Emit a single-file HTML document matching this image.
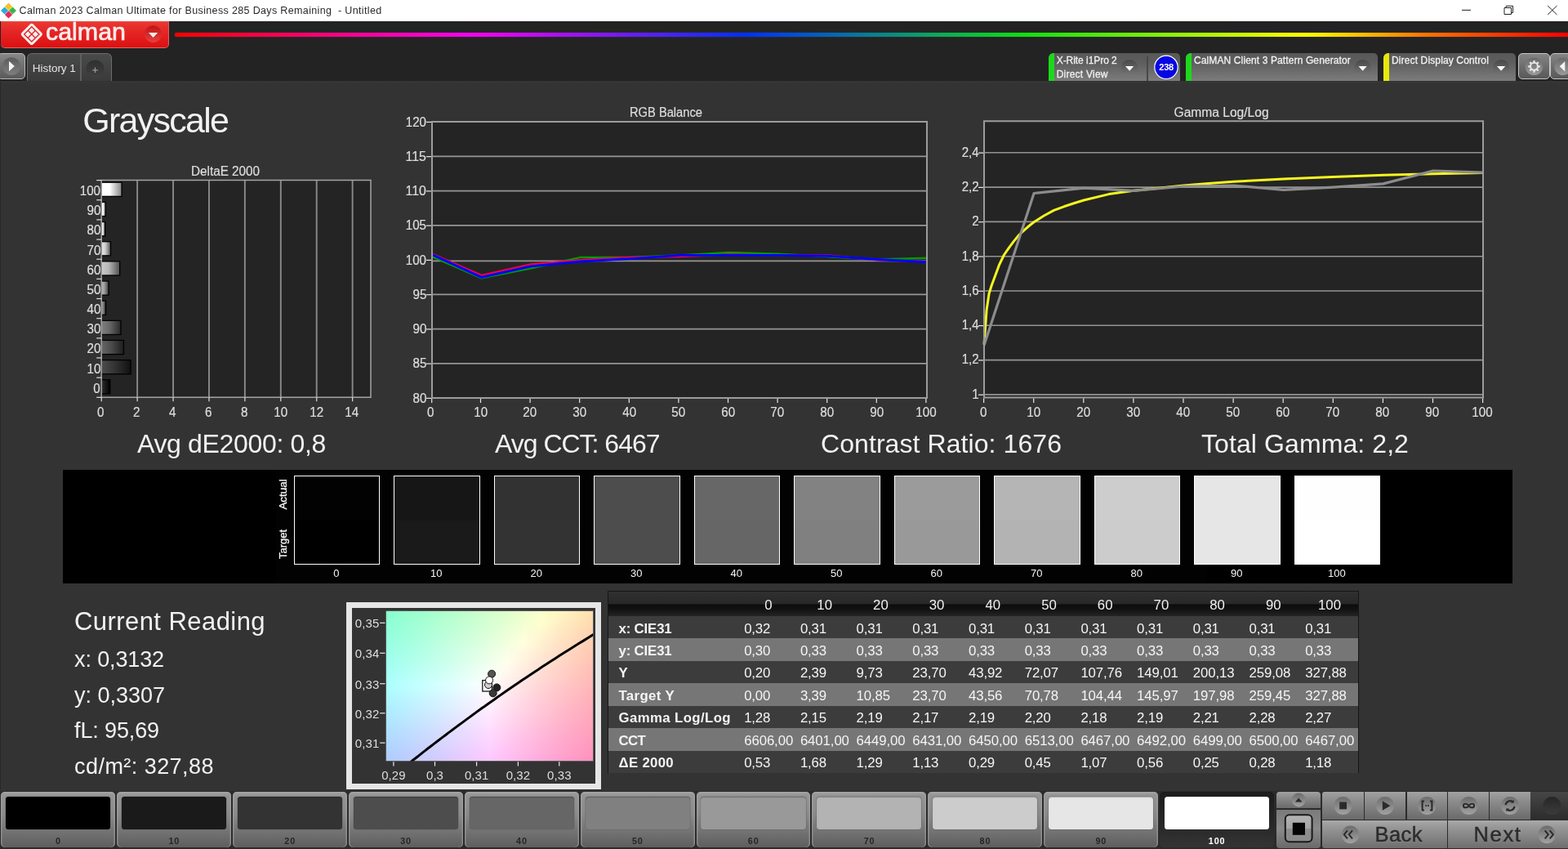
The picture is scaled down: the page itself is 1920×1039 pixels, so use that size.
<!DOCTYPE html>
<html lang="en"><head><meta charset="utf-8"><title>Calman 2023 - Grayscale</title>
<style>
html,body{margin:0;padding:0;}
body{width:1920px;height:1039px;overflow:hidden;background:#333333;position:relative;font-family:"Liberation Sans",sans-serif;}
.b{position:absolute;box-sizing:border-box;}
.t{position:absolute;white-space:pre;}
#w{position:absolute;left:0;top:0;width:1920px;height:1039px;overflow:hidden;will-change:transform;}
svg{position:absolute;left:0;top:0;overflow:visible;}
svg text{font-family:"Liberation Sans",sans-serif;}
</style></head><body>
<div id="w">
<div class="b " style="left:0px;top:0px;width:1920px;height:25.7px;background:#ffffff;"></div>
<svg width="24" height="26" viewBox="0 0 24 26"><g transform="translate(10.5,13)">
<path d="M0-9.5 L4.6-4.9 L0-0.3 L-4.6-4.9Z" fill="#f7c324"/>
<path d="M-4.9-4.6 L-0.3 0 L-4.9 4.6 L-9.5 0Z" fill="#2aa9e0"/>
<path d="M4.9-4.6 L9.5 0 L4.9 4.6 L0.3 0Z" fill="#3cb54a"/>
<path d="M0 0.3 L4.6 4.9 L0 9.5 L-4.6 4.9Z" fill="#e6285a"/>
</g></svg>
<div class="t" style="left:23.50px;top:7.32px;font-size:12.5px;line-height:12.5px;color:#2a2a2a;letter-spacing:0.353px;">Calman 2023 Calman Ultimate for Business 285 Days Remaining  - Untitled</div>
<svg width="1920" height="26" viewBox="0 0 1920 26" style="pointer-events:none">
<path d="M1790 12.4h11" stroke="#222" stroke-width="1" fill="none"/>
<path d="M1842 9.5h8.5v8h-8.500z M1844.200 9.5v-2.200h8.300v8.200h-2" stroke="#222" stroke-width="1" fill="none"/>
<path d="M1895.200 7l11.300 11 M1906.500 7l-11.300 11" stroke="#222" stroke-width="1" fill="none"/>
</svg>
<div class="b " style="left:0px;top:25.7px;width:1920px;height:73.8px;background:#232323;"></div>
<div class="b " style="left:0px;top:99.4px;width:1920px;height:3px;background:linear-gradient(180deg,#2c2c2c 0%,#383838 35%,#363636 65%,#333333 100%);"></div>
<div class="b " style="left:214px;top:39.8px;width:1706px;height:5.6px;background:linear-gradient(90deg,#ff0000 0%,#ff00f0 21%,#0030ff 41%,#10e010 61%,#ffff00 81%,#ff7000 90%,#ff0000 100%);border-radius:2px 0 0 2px;box-shadow:0 0 1.5px rgba(255,255,255,0.15);"></div>
<div class="b " style="left:0.6px;top:25.7px;width:206.6px;height:33.7px;background:linear-gradient(180deg,#e84a40 0%,#e83530 8%,#e42222 50%,#dc1010 100%);border-radius:0 0 5px 5px;border-bottom:1.2px solid #d86868;border-right:1px solid #e06060;"></div>
<svg width="207" height="60" viewBox="0 0 207 60">
<g transform="translate(38.8,41.9) rotate(45)">
<rect x="-10" y="-10" width="20" height="20" rx="2.600" fill="#ffeeee"/>
<rect x="-6.500" y="-6.500" width="13" height="13" fill="none" stroke="#dc2828" stroke-width="1.400"/>
<path d="M0 -6.500V6.500 M-6.500 0H6.500" stroke="#dc2828" stroke-width="1.400"/>
<path d="M-9.600 -5.900H-5.900 M-5.900 -9.600V-5.900" stroke="#d82020" stroke-width="0" />
</g>
<defs><linearGradient id="rdd" x1="0" x2="0" y1="0" y2="1"><stop offset="0" stop-color="#c01414"/><stop offset="1" stop-color="#e84040"/></linearGradient></defs><circle cx="187.500" cy="41.700" r="10.500" fill="url(#rdd)"/>
<path d="M182 40h11.200l-5.600 5.900z" fill="#fff0f0"/>
</svg>
<div class="t" style="left:55.90px;top:24.17px;font-size:29.8px;line-height:29.8px;color:#ffecec;transform:scaleX(1.0202);transform-origin:0 50%;-webkit-text-stroke:0.7px #ffecec;">calman</div>
<div class="b " style="left:-3px;top:65px;width:33.8px;height:32.3px;background:linear-gradient(180deg,#868686,#5a5a5a);border:1.5px solid #b8b8b8;border-radius:5px;"></div>
<svg width="40" height="100" viewBox="0 0 40 100"><defs><linearGradient id="ins" x1="0" x2="0" y1="0" y2="1"><stop offset="0" stop-color="#5c5c5c"/><stop offset="1" stop-color="#7e7e7e"/></linearGradient></defs><circle cx="14" cy="81" r="10.800" fill="url(#ins)"/><path d="M11 74.800v12.400l6.800-6.200z" fill="#f4f4f4"/></svg>
<div class="b " style="left:32.8px;top:64.8px;width:104.4px;height:34.5px;background:linear-gradient(180deg,#4a4a4a,#3a3a3a);border:1.6px solid #6c6c6c;border-bottom:none;border-radius:6px 6px 0 0;"></div>
<div class="b " style="left:98.2px;top:66px;width:2px;height:33.3px;background:#5e5e5e;"></div>
<div class="t" style="left:39.80px;top:76.57px;font-size:13.5px;line-height:13.5px;color:#e4e4e4;letter-spacing:-0.030px;">History 1</div>
<svg width="140" height="100" viewBox="0 0 140 100"><defs><linearGradient id="pl" x1="0" x2="0" y1="0" y2="1"><stop offset="0" stop-color="#303030"/><stop offset="1" stop-color="#404040"/></linearGradient></defs><circle cx="116.500" cy="84.400" r="11" fill="url(#pl)"/><path d="M113.200 85.800h6.600 M116.500 82.500v6.600" stroke="#9a9a9a" stroke-width="1.200"/></svg>
<div class="b " style="left:1283.5px;top:65px;width:161.5px;height:34.4px;background:linear-gradient(180deg,#585858 0%,#5e5e5e 35%,#7c7c7c 100%);border-radius:6px 5px 0 0;overflow:hidden;"><div style="position:absolute;left:0;top:0;width:7px;height:100%;background:#1cd81c;"></div></div>
<div class="b " style="left:1452px;top:65px;width:235px;height:34.4px;background:linear-gradient(180deg,#585858 0%,#5e5e5e 35%,#7c7c7c 100%);border-radius:6px 5px 0 0;overflow:hidden;"><div style="position:absolute;left:0;top:0;width:7px;height:100%;background:#1cd81c;"></div></div>
<div class="b " style="left:1694px;top:65px;width:162px;height:34.4px;background:linear-gradient(180deg,#585858 0%,#5e5e5e 35%,#7c7c7c 100%);border-radius:6px 5px 0 0;overflow:hidden;"><div style="position:absolute;left:0;top:0;width:7px;height:100%;background:#e8e80c;"></div></div>
<div class="b " style="left:1404px;top:69px;width:1.5px;height:30px;background:#484848;"></div>
<div class="t" style="left:1293.70px;top:68.34px;font-size:12px;line-height:12px;color:#f0f0f0;letter-spacing:-0.050px;-webkit-text-stroke:0.3px #f0f0f0;">X-Rite i1Pro 2</div>
<div class="t" style="left:1293.70px;top:84.94px;font-size:12px;line-height:12px;color:#f0f0f0;letter-spacing:0.230px;-webkit-text-stroke:0.3px #f0f0f0;">Direct View</div>
<div class="t" style="left:1462.00px;top:68.34px;font-size:12px;line-height:12px;color:#f0f0f0;letter-spacing:0.118px;-webkit-text-stroke:0.3px #f0f0f0;">CalMAN Client 3 Pattern Generator</div>
<div class="t" style="left:1704.00px;top:68.34px;font-size:12px;line-height:12px;color:#f0f0f0;letter-spacing:0.134px;-webkit-text-stroke:0.3px #f0f0f0;">Direct Display Control</div>
<svg width="1920" height="100" viewBox="0 0 1920 100">
<defs><linearGradient id="dd" x1="0" x2="0" y1="0" y2="1"><stop offset="0" stop-color="#484848"/><stop offset="1" stop-color="#787878"/></linearGradient>
<linearGradient id="dd2" x1="0" x2="0" y1="0" y2="1"><stop offset="0" stop-color="#6a6a6a"/><stop offset="1" stop-color="#9a9a9a"/></linearGradient></defs>
<g fill="url(#dd)"><circle cx="1383.100" cy="83.200" r="10.300"/><circle cx="1668.600" cy="83.200" r="10.300"/><circle cx="1838.100" cy="83.200" r="10.300"/></g>
<g fill="#ffffff"><path d="M1378 81.100h10.200l-5.100 5.700z"/><path d="M1663.500 81.100h10.200l-5.100 5.700z"/><path d="M1833 81.100h10.200l-5.100 5.700z"/></g>
<circle cx="1428" cy="82.300" r="14.200" fill="#0606e4" stroke="#ffffff" stroke-width="1.200"/>
</svg>
<div class="t" style="left:1419.31px;top:77.19px;font-size:11px;line-height:11px;color:#ffffff;font-weight:700;letter-spacing:-0.286px;">238</div>
<div class="b " style="left:1859px;top:65px;width:38.5px;height:32.3px;background:linear-gradient(180deg,#848484,#585858);border:1.5px solid #c4c4c4;border-radius:5px;"></div>
<div class="b " style="left:1898px;top:65px;width:30px;height:32.3px;background:linear-gradient(180deg,#848484,#585858);border:1.5px solid #c4c4c4;border-radius:5px;"></div>
<svg width="1920" height="100" viewBox="0 0 1920 100">
<circle cx="1878.500" cy="81.300" r="10.800" fill="url(#dd2)"/>
<circle cx="1878.500" cy="81.300" r="4.500" fill="none" stroke="#e6e6e6" stroke-width="2.100"/>
<g stroke="#e6e6e6" stroke-width="2.300">
<path d="M1878.500 73.900v2.600 M1878.500 86.100v2.600 M1871.100 81.300h2.600 M1883.300 81.300h2.600 M1873.300 76.100l1.850 1.850 M1881.850 84.650l1.850 1.850 M1873.300 86.500l1.850-1.850 M1881.850 77.950l1.850-1.850"/>
</g>
<circle cx="1914" cy="81.300" r="10.800" fill="url(#dd2)"/>
<path d="M1916.300 75v12.600l-6.600-6.300z" fill="#f4f4f4"/>
</svg>
<div class="b " style="left:0px;top:100px;width:1.3px;height:868px;background:#282828;"></div>
<div class="t" style="left:101.30px;top:125.80px;font-size:43px;line-height:43px;color:#f2f2f2;letter-spacing:-1.731px;">Grayscale</div>
<div class="b " style="left:124.2px;top:220.6px;width:329.8px;height:265.7px;background:#242424;"></div>
<svg width="1920" height="1039" viewBox="0 0 1920 1039"><defs><linearGradient id="g100" x1="0" x2="1" y1="0" y2="0"><stop offset="0" stop-color="#ffffff"/><stop offset="0.4" stop-color="#ffffff"/><stop offset="1" stop-color="#898989"/></linearGradient><linearGradient id="g90" x1="0" x2="1" y1="0" y2="0"><stop offset="0" stop-color="#ffffff"/><stop offset="0.4" stop-color="#ffffff"/><stop offset="1" stop-color="#7c7c7c"/></linearGradient><linearGradient id="g80" x1="0" x2="1" y1="0" y2="0"><stop offset="0" stop-color="#fefefe"/><stop offset="0.4" stop-color="#e8e8e8"/><stop offset="1" stop-color="#6e6e6e"/></linearGradient><linearGradient id="g70" x1="0" x2="1" y1="0" y2="0"><stop offset="0" stop-color="#e5e5e5"/><stop offset="0.4" stop-color="#cfcfcf"/><stop offset="1" stop-color="#616161"/></linearGradient><linearGradient id="g60" x1="0" x2="1" y1="0" y2="0"><stop offset="0" stop-color="#cbcbcb"/><stop offset="0.4" stop-color="#b5b5b5"/><stop offset="1" stop-color="#545454"/></linearGradient><linearGradient id="g50" x1="0" x2="1" y1="0" y2="0"><stop offset="0" stop-color="#b2b2b2"/><stop offset="0.4" stop-color="#9c9c9c"/><stop offset="1" stop-color="#474747"/></linearGradient><linearGradient id="g40" x1="0" x2="1" y1="0" y2="0"><stop offset="0" stop-color="#989898"/><stop offset="0.4" stop-color="#828282"/><stop offset="1" stop-color="#393939"/></linearGradient><linearGradient id="g30" x1="0" x2="1" y1="0" y2="0"><stop offset="0" stop-color="#7f7f7f"/><stop offset="0.4" stop-color="#696969"/><stop offset="1" stop-color="#2c2c2c"/></linearGradient><linearGradient id="g20" x1="0" x2="1" y1="0" y2="0"><stop offset="0" stop-color="#656565"/><stop offset="0.4" stop-color="#4f4f4f"/><stop offset="1" stop-color="#1f1f1f"/></linearGradient><linearGradient id="g10" x1="0" x2="1" y1="0" y2="0"><stop offset="0" stop-color="#4c4c4c"/><stop offset="0.4" stop-color="#363636"/><stop offset="1" stop-color="#121212"/></linearGradient><linearGradient id="g0" x1="0" x2="1" y1="0" y2="0"><stop offset="0" stop-color="#323232"/><stop offset="0.4" stop-color="#1c1c1c"/><stop offset="1" stop-color="#040404"/></linearGradient></defs><path d="M168.12 220.6 V486.3" stroke="#8a8a8a" stroke-width="1.9"/><path d="M212.04 220.6 V486.3" stroke="#8a8a8a" stroke-width="1.9"/><path d="M255.96 220.6 V486.3" stroke="#8a8a8a" stroke-width="1.9"/><path d="M299.88 220.6 V486.3" stroke="#8a8a8a" stroke-width="1.9"/><path d="M343.80 220.6 V486.3" stroke="#8a8a8a" stroke-width="1.9"/><path d="M387.72 220.6 V486.3" stroke="#8a8a8a" stroke-width="1.9"/><path d="M431.64 220.6 V486.3" stroke="#8a8a8a" stroke-width="1.9"/><rect x="124.2" y="222.60" width="25.51" height="18.4" fill="#000"/><rect x="124.7" y="223.90" width="23.71" height="15.8" fill="url(#g100)"/><rect x="124.2" y="246.75" width="5.75" height="18.4" fill="#000"/><rect x="124.7" y="248.05" width="3.95" height="15.8" fill="url(#g90)"/><rect x="124.2" y="270.91" width="5.09" height="18.4" fill="#000"/><rect x="124.7" y="272.21" width="3.29" height="15.8" fill="url(#g80)"/><rect x="124.2" y="295.06" width="11.90" height="18.4" fill="#000"/><rect x="124.7" y="296.36" width="10.10" height="15.8" fill="url(#g70)"/><rect x="124.2" y="319.22" width="23.10" height="18.4" fill="#000"/><rect x="124.7" y="320.52" width="21.30" height="15.8" fill="url(#g60)"/><rect x="124.2" y="343.37" width="9.48" height="18.4" fill="#000"/><rect x="124.7" y="344.67" width="7.68" height="15.8" fill="url(#g50)"/><rect x="124.2" y="367.53" width="5.97" height="18.4" fill="#000"/><rect x="124.7" y="368.83" width="4.17" height="15.8" fill="url(#g40)"/><rect x="124.2" y="391.68" width="24.41" height="18.4" fill="#000"/><rect x="124.7" y="392.98" width="22.61" height="15.8" fill="url(#g30)"/><rect x="124.2" y="415.84" width="27.93" height="18.4" fill="#000"/><rect x="124.7" y="417.14" width="26.13" height="15.8" fill="url(#g20)"/><rect x="124.2" y="439.99" width="36.49" height="18.4" fill="#000"/><rect x="124.7" y="441.29" width="34.69" height="15.8" fill="url(#g10)"/><rect x="124.2" y="464.15" width="11.24" height="18.4" fill="#000"/><rect x="124.7" y="465.45" width="9.44" height="15.8" fill="url(#g0)"/><path d="M124.2 220.6 H454 V486.3 H124.2 Z" fill="none" stroke="#a4a4a4" stroke-width="1.5"/><path d="M118.2 220.60 H124.2" stroke="#e0e0e0" stroke-width="1.2"/><path d="M118.2 244.75 H124.2" stroke="#e0e0e0" stroke-width="1.2"/><path d="M118.2 268.91 H124.2" stroke="#e0e0e0" stroke-width="1.2"/><path d="M118.2 293.06 H124.2" stroke="#e0e0e0" stroke-width="1.2"/><path d="M118.2 317.22 H124.2" stroke="#e0e0e0" stroke-width="1.2"/><path d="M118.2 341.37 H124.2" stroke="#e0e0e0" stroke-width="1.2"/><path d="M118.2 365.53 H124.2" stroke="#e0e0e0" stroke-width="1.2"/><path d="M118.2 389.68 H124.2" stroke="#e0e0e0" stroke-width="1.2"/><path d="M118.2 413.84 H124.2" stroke="#e0e0e0" stroke-width="1.2"/><path d="M118.2 437.99 H124.2" stroke="#e0e0e0" stroke-width="1.2"/><path d="M118.2 462.15 H124.2" stroke="#e0e0e0" stroke-width="1.2"/><path d="M118.2 486.30 H124.2" stroke="#e0e0e0" stroke-width="1.2"/><path d="M124.20 486.3 V491.3" stroke="#e0e0e0" stroke-width="1.2"/><path d="M168.12 486.3 V491.3" stroke="#e0e0e0" stroke-width="1.2"/><path d="M212.04 486.3 V491.3" stroke="#e0e0e0" stroke-width="1.2"/><path d="M255.96 486.3 V491.3" stroke="#e0e0e0" stroke-width="1.2"/><path d="M299.88 486.3 V491.3" stroke="#e0e0e0" stroke-width="1.2"/><path d="M343.80 486.3 V491.3" stroke="#e0e0e0" stroke-width="1.2"/><path d="M387.72 486.3 V491.3" stroke="#e0e0e0" stroke-width="1.2"/><path d="M431.64 486.3 V491.3" stroke="#e0e0e0" stroke-width="1.2"/></svg>
<div class="t" style="left:231.97px;top:201.66px;font-size:16px;line-height:16px;color:#dedede;transform:scaleX(0.9539);transform-origin:50% 50%;-webkit-text-stroke:0.2px #dedede;">DeltaE 2000</div>
<div class="t" style="left:96.87px;top:226.17px;font-size:15.6px;line-height:15.6px;color:#dedede;transform:scaleX(0.9738);transform-origin:100% 50%;-webkit-text-stroke:0.2px #dedede;">100</div>
<div class="t" style="left:105.54px;top:250.33px;font-size:15.6px;line-height:15.6px;color:#dedede;transform:scaleX(0.9735);transform-origin:100% 50%;-webkit-text-stroke:0.2px #dedede;">90</div>
<div class="t" style="left:105.54px;top:274.48px;font-size:15.6px;line-height:15.6px;color:#dedede;transform:scaleX(0.9735);transform-origin:100% 50%;-webkit-text-stroke:0.2px #dedede;">80</div>
<div class="t" style="left:105.54px;top:298.64px;font-size:15.6px;line-height:15.6px;color:#dedede;transform:scaleX(0.9735);transform-origin:100% 50%;-webkit-text-stroke:0.2px #dedede;">70</div>
<div class="t" style="left:105.54px;top:322.79px;font-size:15.6px;line-height:15.6px;color:#dedede;transform:scaleX(0.9735);transform-origin:100% 50%;-webkit-text-stroke:0.2px #dedede;">60</div>
<div class="t" style="left:105.54px;top:346.94px;font-size:15.6px;line-height:15.6px;color:#dedede;transform:scaleX(0.9735);transform-origin:100% 50%;-webkit-text-stroke:0.2px #dedede;">50</div>
<div class="t" style="left:105.54px;top:371.10px;font-size:15.6px;line-height:15.6px;color:#dedede;transform:scaleX(0.9735);transform-origin:100% 50%;-webkit-text-stroke:0.2px #dedede;">40</div>
<div class="t" style="left:105.54px;top:395.25px;font-size:15.6px;line-height:15.6px;color:#dedede;transform:scaleX(0.9735);transform-origin:100% 50%;-webkit-text-stroke:0.2px #dedede;">30</div>
<div class="t" style="left:105.54px;top:419.41px;font-size:15.6px;line-height:15.6px;color:#dedede;transform:scaleX(0.9735);transform-origin:100% 50%;-webkit-text-stroke:0.2px #dedede;">20</div>
<div class="t" style="left:105.54px;top:443.56px;font-size:15.6px;line-height:15.6px;color:#dedede;transform:scaleX(0.9735);transform-origin:100% 50%;-webkit-text-stroke:0.2px #dedede;">10</div>
<div class="t" style="left:114.21px;top:467.72px;font-size:15.6px;line-height:15.6px;color:#dedede;transform:scaleX(0.9727);transform-origin:100% 50%;-webkit-text-stroke:0.2px #dedede;">0</div>
<div class="t" style="left:119.36px;top:496.59px;font-size:15.6px;line-height:15.6px;color:#dedede;transform:scaleX(0.9727);transform-origin:50% 50%;-webkit-text-stroke:0.2px #dedede;">0</div>
<div class="t" style="left:163.28px;top:496.59px;font-size:15.6px;line-height:15.6px;color:#dedede;transform:scaleX(0.9727);transform-origin:50% 50%;-webkit-text-stroke:0.2px #dedede;">2</div>
<div class="t" style="left:207.20px;top:496.59px;font-size:15.6px;line-height:15.6px;color:#dedede;transform:scaleX(0.9727);transform-origin:50% 50%;-webkit-text-stroke:0.2px #dedede;">4</div>
<div class="t" style="left:251.12px;top:496.59px;font-size:15.6px;line-height:15.6px;color:#dedede;transform:scaleX(0.9727);transform-origin:50% 50%;-webkit-text-stroke:0.2px #dedede;">6</div>
<div class="t" style="left:295.04px;top:496.59px;font-size:15.6px;line-height:15.6px;color:#dedede;transform:scaleX(0.9727);transform-origin:50% 50%;-webkit-text-stroke:0.2px #dedede;">8</div>
<div class="t" style="left:334.62px;top:496.59px;font-size:15.6px;line-height:15.6px;color:#dedede;transform:scaleX(0.9735);transform-origin:50% 50%;-webkit-text-stroke:0.2px #dedede;">10</div>
<div class="t" style="left:378.54px;top:496.59px;font-size:15.6px;line-height:15.6px;color:#dedede;transform:scaleX(0.9735);transform-origin:50% 50%;-webkit-text-stroke:0.2px #dedede;">12</div>
<div class="t" style="left:422.46px;top:496.59px;font-size:15.6px;line-height:15.6px;color:#dedede;transform:scaleX(0.9735);transform-origin:50% 50%;-webkit-text-stroke:0.2px #dedede;">14</div>
<div class="b " style="left:529px;top:149px;width:606px;height:338px;background:#242424;"></div>
<svg width="1920" height="1039" viewBox="0 0 1920 1039"><path d="M529 191.45 H1135" stroke="#969696" stroke-width="1.7"/><path d="M529 233.70 H1135" stroke="#969696" stroke-width="1.7"/><path d="M529 275.95 H1135" stroke="#969696" stroke-width="1.7"/><path d="M529 319.30 H1135" stroke="#969696" stroke-width="1.7"/><path d="M529 360.45 H1135" stroke="#969696" stroke-width="1.7"/><path d="M529 402.70 H1135" stroke="#969696" stroke-width="1.7"/><path d="M529 444.95 H1135" stroke="#969696" stroke-width="1.7"/><polyline points="529.0,314.1 589.6,340.3 650.2,328.4 710.8,314.9 771.4,314.9 832.0,312.4 892.6,309.0 953.2,310.7 1013.8,314.1 1074.4,317.5 1135.0,315.8" fill="none" stroke="#009a00" stroke-width="2.4" stroke-linejoin="round"/><polyline points="529.0,310.7 589.6,336.9 650.2,323.4 710.8,318.3 771.4,314.9 832.0,314.1 892.6,311.5 953.2,312.4 1013.8,312.4 1074.4,318.3 1135.0,320.0" fill="none" stroke="#f0004c" stroke-width="2.4" stroke-linejoin="round"/><polyline points="529.0,311.5 589.6,339.4 650.2,325.9 710.8,320.0 771.4,316.6 832.0,312.4 892.6,312.4 953.2,312.4 1013.8,313.2 1074.4,317.5 1135.0,320.8" fill="none" stroke="#0000ff" stroke-width="2.9" stroke-linejoin="round"/><path d="M529 149 H1135 V487 H529 Z" fill="none" stroke="#9c9c9c" stroke-width="2"/><path d="M522 149.40 H528" stroke="#e8e8e8" stroke-width="1.2"/><path d="M522 191.65 H528" stroke="#e8e8e8" stroke-width="1.2"/><path d="M522 233.90 H528" stroke="#e8e8e8" stroke-width="1.2"/><path d="M522 276.15 H528" stroke="#e8e8e8" stroke-width="1.2"/><path d="M522 318.40 H528" stroke="#e8e8e8" stroke-width="1.2"/><path d="M522 360.65 H528" stroke="#e8e8e8" stroke-width="1.2"/><path d="M522 402.90 H528" stroke="#e8e8e8" stroke-width="1.2"/><path d="M522 445.15 H528" stroke="#e8e8e8" stroke-width="1.2"/><path d="M522 487.40 H528" stroke="#e8e8e8" stroke-width="1.2"/><path d="M528.70 488 V493" stroke="#e8e8e8" stroke-width="1.2"/><path d="M588.50 488 V493" stroke="#e8e8e8" stroke-width="1.2"/><path d="M649.10 488 V493" stroke="#e8e8e8" stroke-width="1.2"/><path d="M709.70 488 V493" stroke="#e8e8e8" stroke-width="1.2"/><path d="M770.30 488 V493" stroke="#e8e8e8" stroke-width="1.2"/><path d="M830.90 488 V493" stroke="#e8e8e8" stroke-width="1.2"/><path d="M891.50 488 V493" stroke="#e8e8e8" stroke-width="1.2"/><path d="M952.10 488 V493" stroke="#e8e8e8" stroke-width="1.2"/><path d="M1012.70 488 V493" stroke="#e8e8e8" stroke-width="1.2"/><path d="M1073.30 488 V493" stroke="#e8e8e8" stroke-width="1.2"/><path d="M1133.90 488 V493" stroke="#e8e8e8" stroke-width="1.2"/></svg>
<div class="t" style="left:767.03px;top:129.66px;font-size:16px;line-height:16px;color:#dedede;transform:scaleX(0.9181);transform-origin:50% 50%;-webkit-text-stroke:0.2px #dedede;">RGB Balance</div>
<div class="t" style="left:495.87px;top:141.59px;font-size:15.6px;line-height:15.6px;color:#dedede;transform:scaleX(0.9738);transform-origin:100% 50%;-webkit-text-stroke:0.2px #dedede;">120</div>
<div class="t" style="left:497.02px;top:183.84px;font-size:15.6px;line-height:15.6px;color:#dedede;transform:scaleX(1.0191);transform-origin:100% 50%;-webkit-text-stroke:0.2px #dedede;">115</div>
<div class="t" style="left:497.02px;top:226.09px;font-size:15.6px;line-height:15.6px;color:#dedede;transform:scaleX(1.0191);transform-origin:100% 50%;-webkit-text-stroke:0.2px #dedede;">110</div>
<div class="t" style="left:495.87px;top:268.34px;font-size:15.6px;line-height:15.6px;color:#dedede;transform:scaleX(0.9738);transform-origin:100% 50%;-webkit-text-stroke:0.2px #dedede;">105</div>
<div class="t" style="left:495.87px;top:310.59px;font-size:15.6px;line-height:15.6px;color:#dedede;transform:scaleX(0.9738);transform-origin:100% 50%;-webkit-text-stroke:0.2px #dedede;">100</div>
<div class="t" style="left:504.54px;top:352.84px;font-size:15.6px;line-height:15.6px;color:#dedede;transform:scaleX(0.9735);transform-origin:100% 50%;-webkit-text-stroke:0.2px #dedede;">95</div>
<div class="t" style="left:504.54px;top:395.09px;font-size:15.6px;line-height:15.6px;color:#dedede;transform:scaleX(0.9735);transform-origin:100% 50%;-webkit-text-stroke:0.2px #dedede;">90</div>
<div class="t" style="left:504.54px;top:437.34px;font-size:15.6px;line-height:15.6px;color:#dedede;transform:scaleX(0.9735);transform-origin:100% 50%;-webkit-text-stroke:0.2px #dedede;">85</div>
<div class="t" style="left:504.54px;top:479.59px;font-size:15.6px;line-height:15.6px;color:#dedede;transform:scaleX(0.9735);transform-origin:100% 50%;-webkit-text-stroke:0.2px #dedede;">80</div>
<div class="t" style="left:523.46px;top:496.59px;font-size:15.6px;line-height:15.6px;color:#dedede;transform:scaleX(0.9727);transform-origin:50% 50%;-webkit-text-stroke:0.2px #dedede;">0</div>
<div class="t" style="left:579.72px;top:496.59px;font-size:15.6px;line-height:15.6px;color:#dedede;transform:scaleX(0.9735);transform-origin:50% 50%;-webkit-text-stroke:0.2px #dedede;">10</div>
<div class="t" style="left:640.32px;top:496.59px;font-size:15.6px;line-height:15.6px;color:#dedede;transform:scaleX(0.9735);transform-origin:50% 50%;-webkit-text-stroke:0.2px #dedede;">20</div>
<div class="t" style="left:700.92px;top:496.59px;font-size:15.6px;line-height:15.6px;color:#dedede;transform:scaleX(0.9735);transform-origin:50% 50%;-webkit-text-stroke:0.2px #dedede;">30</div>
<div class="t" style="left:761.52px;top:496.59px;font-size:15.6px;line-height:15.6px;color:#dedede;transform:scaleX(0.9735);transform-origin:50% 50%;-webkit-text-stroke:0.2px #dedede;">40</div>
<div class="t" style="left:822.12px;top:496.59px;font-size:15.6px;line-height:15.6px;color:#dedede;transform:scaleX(0.9735);transform-origin:50% 50%;-webkit-text-stroke:0.2px #dedede;">50</div>
<div class="t" style="left:882.72px;top:496.59px;font-size:15.6px;line-height:15.6px;color:#dedede;transform:scaleX(0.9735);transform-origin:50% 50%;-webkit-text-stroke:0.2px #dedede;">60</div>
<div class="t" style="left:943.32px;top:496.59px;font-size:15.6px;line-height:15.6px;color:#dedede;transform:scaleX(0.9735);transform-origin:50% 50%;-webkit-text-stroke:0.2px #dedede;">70</div>
<div class="t" style="left:1003.92px;top:496.59px;font-size:15.6px;line-height:15.6px;color:#dedede;transform:scaleX(0.9735);transform-origin:50% 50%;-webkit-text-stroke:0.2px #dedede;">80</div>
<div class="t" style="left:1064.52px;top:496.59px;font-size:15.6px;line-height:15.6px;color:#dedede;transform:scaleX(0.9735);transform-origin:50% 50%;-webkit-text-stroke:0.2px #dedede;">90</div>
<div class="t" style="left:1120.78px;top:496.59px;font-size:15.6px;line-height:15.6px;color:#dedede;transform:scaleX(0.9738);transform-origin:50% 50%;-webkit-text-stroke:0.2px #dedede;">100</div>
<div class="b " style="left:1205px;top:148.3px;width:611px;height:338.2px;background:#242424;"></div>
<svg width="1920" height="1039" viewBox="0 0 1920 1039"><path d="M1205 482.90 H1816" stroke="#939393" stroke-width="1.6"/><path d="M1205 440.60 H1816" stroke="#939393" stroke-width="1.6"/><path d="M1205 398.30 H1816" stroke="#939393" stroke-width="1.6"/><path d="M1205 356.00 H1816" stroke="#939393" stroke-width="1.6"/><path d="M1205 313.70 H1816" stroke="#939393" stroke-width="1.6"/><path d="M1205 271.40 H1816" stroke="#939393" stroke-width="1.6"/><path d="M1205 229.10 H1816" stroke="#939393" stroke-width="1.6"/><path d="M1205 186.80 H1816" stroke="#939393" stroke-width="1.6"/><polyline points="1205.0,421.6 1208.1,379.3 1211.1,359.2 1214.2,349.2 1217.2,341.2 1223.3,324.7 1229.4,312.0 1235.5,303.1 1241.7,294.9 1247.8,287.5 1253.9,281.8 1260.0,276.5 1266.1,271.8 1278.3,264.0 1290.5,257.4 1302.8,252.8 1315.0,248.8 1327.2,245.0 1357.8,237.6 1388.3,233.3 1418.8,230.2 1449.4,227.0 1480.0,224.4 1510.5,222.3 1571.6,218.9 1632.7,216.4 1693.8,214.3 1754.9,212.8 1816.0,211.5" fill="none" stroke="#f6f620" stroke-width="3" stroke-linejoin="round"/><polyline points="1205.0,422.6 1266.1,236.5 1327.2,230.2 1388.3,233.3 1449.4,228.0 1510.5,227.0 1571.6,232.3 1632.7,229.1 1693.8,224.9 1754.9,209.0 1816.0,211.1" fill="none" stroke="#8c8c8c" stroke-width="3.2" stroke-linejoin="round"/><path d="M1205 148.3 H1816 V486.5 H1205 Z" fill="none" stroke="#9c9c9c" stroke-width="2"/><path d="M1198 483.20 H1204" stroke="#e8e8e8" stroke-width="1.2"/><path d="M1198 440.90 H1204" stroke="#e8e8e8" stroke-width="1.2"/><path d="M1198 398.60 H1204" stroke="#e8e8e8" stroke-width="1.2"/><path d="M1198 356.30 H1204" stroke="#e8e8e8" stroke-width="1.2"/><path d="M1198 314.00 H1204" stroke="#e8e8e8" stroke-width="1.2"/><path d="M1198 271.70 H1204" stroke="#e8e8e8" stroke-width="1.2"/><path d="M1198 229.40 H1204" stroke="#e8e8e8" stroke-width="1.2"/><path d="M1198 187.10 H1204" stroke="#e8e8e8" stroke-width="1.2"/><path d="M1204.60 487.5 V493" stroke="#e8e8e8" stroke-width="1.2"/><path d="M1265.70 487.5 V493" stroke="#e8e8e8" stroke-width="1.2"/><path d="M1326.80 487.5 V493" stroke="#e8e8e8" stroke-width="1.2"/><path d="M1387.90 487.5 V493" stroke="#e8e8e8" stroke-width="1.2"/><path d="M1449.00 487.5 V493" stroke="#e8e8e8" stroke-width="1.2"/><path d="M1510.10 487.5 V493" stroke="#e8e8e8" stroke-width="1.2"/><path d="M1571.20 487.5 V493" stroke="#e8e8e8" stroke-width="1.2"/><path d="M1632.30 487.5 V493" stroke="#e8e8e8" stroke-width="1.2"/><path d="M1693.40 487.5 V493" stroke="#e8e8e8" stroke-width="1.2"/><path d="M1754.50 487.5 V493" stroke="#e8e8e8" stroke-width="1.2"/><path d="M1815.60 487.5 V493" stroke="#e8e8e8" stroke-width="1.2"/></svg>
<div class="t" style="left:1436.41px;top:129.66px;font-size:16px;line-height:16px;color:#dedede;transform:scaleX(0.9733);transform-origin:50% 50%;-webkit-text-stroke:0.2px #dedede;">Gamma Log/Log</div>
<div class="t" style="left:1189.61px;top:474.79px;font-size:15.6px;line-height:15.6px;color:#dedede;transform:scaleX(0.9727);transform-origin:100% 50%;-webkit-text-stroke:0.2px #dedede;">1</div>
<div class="t" style="left:1176.61px;top:432.49px;font-size:15.6px;line-height:15.6px;color:#dedede;transform:scaleX(0.9683);transform-origin:100% 50%;-webkit-text-stroke:0.2px #dedede;">1,2</div>
<div class="t" style="left:1176.61px;top:390.19px;font-size:15.6px;line-height:15.6px;color:#dedede;transform:scaleX(0.9683);transform-origin:100% 50%;-webkit-text-stroke:0.2px #dedede;">1,4</div>
<div class="t" style="left:1176.61px;top:347.89px;font-size:15.6px;line-height:15.6px;color:#dedede;transform:scaleX(0.9683);transform-origin:100% 50%;-webkit-text-stroke:0.2px #dedede;">1,6</div>
<div class="t" style="left:1176.61px;top:305.59px;font-size:15.6px;line-height:15.6px;color:#dedede;transform:scaleX(0.9683);transform-origin:100% 50%;-webkit-text-stroke:0.2px #dedede;">1,8</div>
<div class="t" style="left:1189.61px;top:263.29px;font-size:15.6px;line-height:15.6px;color:#dedede;transform:scaleX(0.9727);transform-origin:100% 50%;-webkit-text-stroke:0.2px #dedede;">2</div>
<div class="t" style="left:1176.61px;top:220.99px;font-size:15.6px;line-height:15.6px;color:#dedede;transform:scaleX(0.9683);transform-origin:100% 50%;-webkit-text-stroke:0.2px #dedede;">2,2</div>
<div class="t" style="left:1176.61px;top:178.69px;font-size:15.6px;line-height:15.6px;color:#dedede;transform:scaleX(0.9683);transform-origin:100% 50%;-webkit-text-stroke:0.2px #dedede;">2,4</div>
<div class="t" style="left:1199.76px;top:496.59px;font-size:15.6px;line-height:15.6px;color:#dedede;transform:scaleX(0.9727);transform-origin:50% 50%;-webkit-text-stroke:0.2px #dedede;">0</div>
<div class="t" style="left:1256.52px;top:496.59px;font-size:15.6px;line-height:15.6px;color:#dedede;transform:scaleX(0.9735);transform-origin:50% 50%;-webkit-text-stroke:0.2px #dedede;">10</div>
<div class="t" style="left:1317.62px;top:496.59px;font-size:15.6px;line-height:15.6px;color:#dedede;transform:scaleX(0.9735);transform-origin:50% 50%;-webkit-text-stroke:0.2px #dedede;">20</div>
<div class="t" style="left:1378.72px;top:496.59px;font-size:15.6px;line-height:15.6px;color:#dedede;transform:scaleX(0.9735);transform-origin:50% 50%;-webkit-text-stroke:0.2px #dedede;">30</div>
<div class="t" style="left:1439.82px;top:496.59px;font-size:15.6px;line-height:15.6px;color:#dedede;transform:scaleX(0.9735);transform-origin:50% 50%;-webkit-text-stroke:0.2px #dedede;">40</div>
<div class="t" style="left:1500.92px;top:496.59px;font-size:15.6px;line-height:15.6px;color:#dedede;transform:scaleX(0.9735);transform-origin:50% 50%;-webkit-text-stroke:0.2px #dedede;">50</div>
<div class="t" style="left:1562.02px;top:496.59px;font-size:15.6px;line-height:15.6px;color:#dedede;transform:scaleX(0.9735);transform-origin:50% 50%;-webkit-text-stroke:0.2px #dedede;">60</div>
<div class="t" style="left:1623.12px;top:496.59px;font-size:15.6px;line-height:15.6px;color:#dedede;transform:scaleX(0.9735);transform-origin:50% 50%;-webkit-text-stroke:0.2px #dedede;">70</div>
<div class="t" style="left:1684.22px;top:496.59px;font-size:15.6px;line-height:15.6px;color:#dedede;transform:scaleX(0.9735);transform-origin:50% 50%;-webkit-text-stroke:0.2px #dedede;">80</div>
<div class="t" style="left:1745.32px;top:496.59px;font-size:15.6px;line-height:15.6px;color:#dedede;transform:scaleX(0.9735);transform-origin:50% 50%;-webkit-text-stroke:0.2px #dedede;">90</div>
<div class="t" style="left:1802.08px;top:496.59px;font-size:15.6px;line-height:15.6px;color:#dedede;transform:scaleX(0.9738);transform-origin:50% 50%;-webkit-text-stroke:0.2px #dedede;">100</div>
<div class="t" style="left:168.00px;top:526.91px;font-size:32px;line-height:32px;color:#f2f2f2;letter-spacing:-0.336px;">Avg dE2000: 0,8</div>
<div class="t" style="left:606.00px;top:526.91px;font-size:32px;line-height:32px;color:#f2f2f2;letter-spacing:-1.011px;">Avg CCT: 6467</div>
<div class="t" style="left:1005.00px;top:526.91px;font-size:32px;line-height:32px;color:#f2f2f2;letter-spacing:0.075px;">Contrast Ratio: 1676</div>
<div class="t" style="left:1471.00px;top:526.91px;font-size:32px;line-height:32px;color:#f2f2f2;letter-spacing:0.091px;">Total Gamma: 2,2</div>
<div class="b " style="left:77px;top:574.6px;width:1775px;height:139.2px;background:#000000;"></div>
<div class="b " style="left:338px;top:574.6px;width:1140px;height:139.2px;background:#020202;"></div>
<div class="b " style="left:359.5px;top:581.5px;width:105.5px;height:109.3px;border:1.8px solid #ffffff;background:linear-gradient(180deg,#020202 0,#020202 50%,#000000 50%,#000000 100%);"></div>
<div class="t" style="left:408.18px;top:694.70px;font-size:13px;line-height:13px;color:#f4f4f4;letter-spacing:0.066px;">0</div>
<div class="b " style="left:482px;top:581.5px;width:105.5px;height:109.3px;border:1.8px solid #ffffff;background:linear-gradient(180deg,#161616 0,#161616 50%,#1a1a1a 50%,#1a1a1a 100%);"></div>
<div class="t" style="left:527.03px;top:694.70px;font-size:13px;line-height:13px;color:#f4f4f4;letter-spacing:0.066px;">10</div>
<div class="b " style="left:604.5px;top:581.5px;width:105.5px;height:109.3px;border:1.8px solid #ffffff;background:linear-gradient(180deg,#323232 0,#323232 50%,#333333 50%,#333333 100%);"></div>
<div class="t" style="left:649.53px;top:694.70px;font-size:13px;line-height:13px;color:#f4f4f4;letter-spacing:0.066px;">20</div>
<div class="b " style="left:727px;top:581.5px;width:105.5px;height:109.3px;border:1.8px solid #ffffff;background:linear-gradient(180deg,#4d4d4d 0,#4d4d4d 50%,#4d4d4d 50%,#4d4d4d 100%);"></div>
<div class="t" style="left:772.03px;top:694.70px;font-size:13px;line-height:13px;color:#f4f4f4;letter-spacing:0.066px;">30</div>
<div class="b " style="left:849.5px;top:581.5px;width:105.5px;height:109.3px;border:1.8px solid #ffffff;background:linear-gradient(180deg,#676767 0,#676767 50%,#666666 50%,#666666 100%);"></div>
<div class="t" style="left:894.53px;top:694.70px;font-size:13px;line-height:13px;color:#f4f4f4;letter-spacing:0.066px;">40</div>
<div class="b " style="left:972px;top:581.5px;width:105.5px;height:109.3px;border:1.8px solid #ffffff;background:linear-gradient(180deg,#828282 0,#828282 50%,#808080 50%,#808080 100%);"></div>
<div class="t" style="left:1017.03px;top:694.70px;font-size:13px;line-height:13px;color:#f4f4f4;letter-spacing:0.066px;">50</div>
<div class="b " style="left:1094.5px;top:581.5px;width:105.5px;height:109.3px;border:1.8px solid #ffffff;background:linear-gradient(180deg,#9b9b9b 0,#9b9b9b 50%,#999999 50%,#999999 100%);"></div>
<div class="t" style="left:1139.53px;top:694.70px;font-size:13px;line-height:13px;color:#f4f4f4;letter-spacing:0.066px;">60</div>
<div class="b " style="left:1217px;top:581.5px;width:105.5px;height:109.3px;border:1.8px solid #ffffff;background:linear-gradient(180deg,#b5b5b5 0,#b5b5b5 50%,#b3b3b3 50%,#b3b3b3 100%);"></div>
<div class="t" style="left:1262.03px;top:694.70px;font-size:13px;line-height:13px;color:#f4f4f4;letter-spacing:0.066px;">70</div>
<div class="b " style="left:1339.5px;top:581.5px;width:105.5px;height:109.3px;border:1.8px solid #ffffff;background:linear-gradient(180deg,#cdcdcd 0,#cdcdcd 50%,#cccccc 50%,#cccccc 100%);"></div>
<div class="t" style="left:1384.53px;top:694.70px;font-size:13px;line-height:13px;color:#f4f4f4;letter-spacing:0.066px;">80</div>
<div class="b " style="left:1462px;top:581.5px;width:105.5px;height:109.3px;border:1.8px solid #ffffff;background:linear-gradient(180deg,#e6e6e6 0,#e6e6e6 50%,#e6e6e6 50%,#e6e6e6 100%);"></div>
<div class="t" style="left:1507.03px;top:694.70px;font-size:13px;line-height:13px;color:#f4f4f4;letter-spacing:0.066px;">90</div>
<div class="b " style="left:1584.5px;top:581.5px;width:105.5px;height:109.3px;border:1.8px solid #ffffff;background:linear-gradient(180deg,#fefefe 0,#fefefe 50%,#ffffff 50%,#ffffff 100%);"></div>
<div class="t" style="left:1625.88px;top:694.70px;font-size:13px;line-height:13px;color:#f4f4f4;letter-spacing:0.066px;">100</div>
<div class="t" style="left:341px;top:585px;width:12px;height:40px;"><div style="position:absolute;left:6.4px;top:20.1px;transform:translate(-50%,-50%) rotate(-90deg);font-size:13.4px;color:#f6f6f6;line-height:14px;-webkit-text-stroke:0.3px #f6f6f6;">Actual</div></div>
<div class="t" style="left:341px;top:646px;width:12px;height:40px;"><div style="position:absolute;left:6.4px;top:20px;transform:translate(-50%,-50%) rotate(-90deg);font-size:13px;color:#f6f6f6;line-height:14px;-webkit-text-stroke:0.3px #f6f6f6;">Target</div></div>
<div class="t" style="left:91.00px;top:744.76px;font-size:31px;line-height:31px;color:#f2f2f2;letter-spacing:0.435px;">Current Reading</div>
<div class="t" style="left:91.00px;top:794.14px;font-size:27px;line-height:27px;color:#f2f2f2;letter-spacing:-0.122px;">x: 0,3132</div>
<div class="t" style="left:91.00px;top:837.84px;font-size:27px;line-height:27px;color:#f2f2f2;letter-spacing:-0.010px;">y: 0,3307</div>
<div class="t" style="left:91.00px;top:881.14px;font-size:27px;line-height:27px;color:#f2f2f2;letter-spacing:-0.122px;">fL: 95,69</div>
<div class="t" style="left:91.00px;top:924.64px;font-size:27px;line-height:27px;color:#f2f2f2;letter-spacing:0.454px;">cd/m²: 327,88</div>
<div class="b " style="left:424.2px;top:737px;width:312px;height:228.8px;background:#333333;border:7.4px solid #e6e6e6;"></div>
<div class="b " style="left:472.7px;top:748.4px;width:253.5px;height:183.1px;overflow:hidden;background:#fff;box-shadow:0 0 0 0.6px rgba(160,160,160,0.6);"><div style="position:absolute;left:0;top:-0.20px;width:100%;height:4.38px;background:linear-gradient(90deg,#88ffcf 0.0%,#93ffce 8.3%,#9fffce 16.7%,#abffcd 25.0%,#b7ffcd 33.3%,#c4ffcc 41.7%,#d1ffcc 50.0%,#deffcb 58.3%,#ecffcb 66.7%,#f9ffca 75.0%,#fff7c3 83.3%,#ffeab8 91.7%,#ffdeae 100.0%)"></div><div style="position:absolute;left:0;top:3.78px;width:100%;height:4.38px;background:linear-gradient(90deg,#89ffd1 0.0%,#95ffd0 8.3%,#a1ffd0 16.7%,#adffcf 25.0%,#b9ffcf 33.3%,#c6ffce 41.7%,#d3ffce 50.0%,#e0ffcd 58.3%,#eeffcd 66.7%,#fbffcc 75.0%,#fff5c3 83.3%,#ffe8b9 91.7%,#ffdcaf 100.0%)"></div><div style="position:absolute;left:0;top:7.76px;width:100%;height:4.38px;background:linear-gradient(90deg,#8bffd3 0.0%,#96ffd2 8.3%,#a2ffd2 16.7%,#aeffd1 25.0%,#bbffd1 33.3%,#c8ffd0 41.7%,#d5ffd0 50.0%,#e2ffcf 58.3%,#f0ffcf 66.7%,#feffce 75.0%,#fff3c4 83.3%,#ffe6b9 91.7%,#ffdaaf 100.0%)"></div><div style="position:absolute;left:0;top:11.74px;width:100%;height:4.38px;background:linear-gradient(90deg,#8cffd5 0.0%,#98ffd4 8.3%,#a4ffd4 16.7%,#b0ffd3 25.0%,#bdffd3 33.3%,#caffd2 41.7%,#d7ffd2 50.0%,#e4ffd1 58.3%,#f2ffd1 66.7%,#fffed0 75.0%,#fff1c4 83.3%,#ffe4b9 91.7%,#ffd9b0 100.0%)"></div><div style="position:absolute;left:0;top:15.72px;width:100%;height:4.38px;background:linear-gradient(90deg,#8effd7 0.0%,#99ffd6 8.3%,#a5ffd6 16.7%,#b2ffd5 25.0%,#beffd5 33.3%,#cbffd4 41.7%,#d9ffd4 50.0%,#e6ffd3 58.3%,#f4ffd3 66.7%,#fffcd0 75.0%,#ffeec4 83.3%,#ffe2ba 91.7%,#ffd7b0 100.0%)"></div><div style="position:absolute;left:0;top:19.70px;width:100%;height:4.38px;background:linear-gradient(90deg,#8fffd9 0.0%,#9bffd8 8.3%,#a7ffd8 16.7%,#b4ffd7 25.0%,#c0ffd7 33.3%,#cdffd7 41.7%,#dbffd6 50.0%,#e8ffd6 58.3%,#f6ffd5 66.7%,#fffad0 75.0%,#ffecc5 83.3%,#ffe0ba 91.7%,#ffd5b0 100.0%)"></div><div style="position:absolute;left:0;top:23.68px;width:100%;height:4.38px;background:linear-gradient(90deg,#90ffdb 0.0%,#9cffda 8.3%,#a9ffda 16.7%,#b5ffd9 25.0%,#c2ffd9 33.3%,#cfffd9 41.7%,#ddffd8 50.0%,#eaffd8 58.3%,#f8ffd7 66.7%,#fff7d1 75.0%,#ffeac5 83.3%,#ffdeba 91.7%,#ffd3b1 100.0%)"></div><div style="position:absolute;left:0;top:27.66px;width:100%;height:4.38px;background:linear-gradient(90deg,#92ffdd 0.0%,#9effdc 8.3%,#aaffdc 16.7%,#b7ffdc 25.0%,#c4ffdb 33.3%,#d1ffdb 41.7%,#dfffda 50.0%,#ecffda 58.3%,#fbffda 66.7%,#fff5d1 75.0%,#ffe8c5 83.3%,#ffdcbb 91.7%,#ffd1b1 100.0%)"></div><div style="position:absolute;left:0;top:31.64px;width:100%;height:4.38px;background:linear-gradient(90deg,#93ffdf 0.0%,#a0ffde 8.3%,#acffde 16.7%,#b9ffde 25.0%,#c6ffdd 33.3%,#d3ffdd 41.7%,#e1ffdd 50.0%,#efffdc 58.3%,#fdffdc 66.7%,#fff3d1 75.0%,#ffe6c6 83.3%,#ffdabb 91.7%,#ffcfb1 100.0%)"></div><div style="position:absolute;left:0;top:35.62px;width:100%;height:4.38px;background:linear-gradient(90deg,#95ffe1 0.0%,#a1ffe0 8.3%,#aeffe0 16.7%,#bbffe0 25.0%,#c8ffdf 33.3%,#d5ffdf 41.7%,#e3ffdf 50.0%,#f1ffde 58.3%,#ffffde 66.7%,#fff1d1 75.0%,#ffe4c6 83.3%,#ffd8bb 91.7%,#ffceb2 100.0%)"></div><div style="position:absolute;left:0;top:39.60px;width:100%;height:4.38px;background:linear-gradient(90deg,#97ffe3 0.0%,#a3ffe3 8.3%,#afffe2 16.7%,#bcffe2 25.0%,#c9ffe2 33.3%,#d7ffe1 41.7%,#e5ffe1 50.0%,#f3ffe1 58.3%,#fffdde 66.7%,#ffefd2 75.0%,#ffe2c6 83.3%,#ffd7bc 91.7%,#ffccb2 100.0%)"></div><div style="position:absolute;left:0;top:43.58px;width:100%;height:4.38px;background:linear-gradient(90deg,#98ffe5 0.0%,#a4ffe5 8.3%,#b1ffe4 16.7%,#beffe4 25.0%,#cbffe4 33.3%,#d9ffe4 41.7%,#e7ffe3 50.0%,#f5ffe3 58.3%,#fffadf 66.7%,#ffedd2 75.0%,#ffe0c7 83.3%,#ffd5bc 91.7%,#ffcab2 100.0%)"></div><div style="position:absolute;left:0;top:47.57px;width:100%;height:4.38px;background:linear-gradient(90deg,#9affe7 0.0%,#a6ffe7 8.3%,#b3ffe7 16.7%,#c0ffe6 25.0%,#cdffe6 33.3%,#dbffe6 41.7%,#e9ffe6 50.0%,#f7ffe5 58.3%,#fff8df 66.7%,#ffebd2 75.0%,#ffdec7 83.3%,#ffd3bd 91.7%,#ffc8b3 100.0%)"></div><div style="position:absolute;left:0;top:51.55px;width:100%;height:4.38px;background:linear-gradient(90deg,#9bffe9 0.0%,#a8ffe9 8.3%,#b5ffe9 16.7%,#c2ffe9 25.0%,#cfffe8 33.3%,#ddffe8 41.7%,#ebffe8 50.0%,#faffe8 58.3%,#fff6df 66.7%,#ffe8d3 75.0%,#ffdcc7 83.3%,#ffd1bd 91.7%,#ffc6b3 100.0%)"></div><div style="position:absolute;left:0;top:55.53px;width:100%;height:4.38px;background:linear-gradient(90deg,#9dffec 0.0%,#aaffeb 8.3%,#b6ffeb 16.7%,#c4ffeb 25.0%,#d1ffeb 33.3%,#dfffea 41.7%,#edffea 50.0%,#fcffea 58.3%,#fff4df 66.7%,#ffe6d3 75.0%,#ffdac8 83.3%,#ffcfbd 91.7%,#ffc5b4 100.0%)"></div><div style="position:absolute;left:0;top:59.51px;width:100%;height:4.38px;background:linear-gradient(90deg,#9effee 0.0%,#abffee 8.3%,#b8ffed 16.7%,#c6ffed 25.0%,#d3ffed 33.3%,#e1ffed 41.7%,#f0ffed 50.0%,#feffec 58.3%,#fff1e0 66.7%,#ffe4d3 75.0%,#ffd8c8 83.3%,#ffcdbe 91.7%,#ffc3b4 100.0%)"></div><div style="position:absolute;left:0;top:63.49px;width:100%;height:4.38px;background:linear-gradient(90deg,#a0fff0 0.0%,#adfff0 8.3%,#bafff0 16.7%,#c8fff0 25.0%,#d5ffef 33.3%,#e3ffef 41.7%,#f2ffef 50.0%,#fffded 58.3%,#ffefe0 66.7%,#ffe2d4 75.0%,#ffd6c8 83.3%,#ffcbbe 91.7%,#ffc1b4 100.0%)"></div><div style="position:absolute;left:0;top:67.47px;width:100%;height:4.38px;background:linear-gradient(90deg,#a2fff2 0.0%,#affff2 8.3%,#bcfff2 16.7%,#c9fff2 25.0%,#d7fff2 33.3%,#e6fff2 41.7%,#f4fff1 50.0%,#fffbee 58.3%,#ffede0 66.7%,#ffe0d4 75.0%,#ffd4c9 83.3%,#ffc9be 91.7%,#ffbfb5 100.0%)"></div><div style="position:absolute;left:0;top:71.45px;width:100%;height:4.38px;background:linear-gradient(90deg,#a3fff5 0.0%,#b0fff4 8.3%,#befff4 16.7%,#cbfff4 25.0%,#d9fff4 33.3%,#e8fff4 41.7%,#f6fff4 50.0%,#fff9ee 58.3%,#ffebe0 66.7%,#ffded4 75.0%,#ffd2c9 83.3%,#ffc8bf 91.7%,#ffbeb5 100.0%)"></div><div style="position:absolute;left:0;top:75.43px;width:100%;height:4.38px;background:linear-gradient(90deg,#a5fff7 0.0%,#b2fff7 8.3%,#c0fff7 16.7%,#cdfff7 25.0%,#dcfff7 33.3%,#eafff7 41.7%,#f9fff6 50.0%,#fff6ee 58.3%,#ffe9e1 66.7%,#ffdcd4 75.0%,#ffd1c9 83.3%,#ffc6bf 91.7%,#ffbcb5 100.0%)"></div><div style="position:absolute;left:0;top:79.41px;width:100%;height:4.38px;background:linear-gradient(90deg,#a7fff9 0.0%,#b4fff9 8.3%,#c2fff9 16.7%,#cffff9 25.0%,#defff9 33.3%,#ecfff9 41.7%,#fbfff9 50.0%,#fff4ee 58.3%,#ffe7e1 66.7%,#ffdad5 75.0%,#ffcfca 83.3%,#ffc4bf 91.7%,#ffbab6 100.0%)"></div><div style="position:absolute;left:0;top:83.39px;width:100%;height:4.38px;background:linear-gradient(90deg,#a9fffc 0.0%,#b6fffc 8.3%,#c4fffc 16.7%,#d1fffc 25.0%,#e0fffc 33.3%,#eefffc 41.7%,#fdfffb 50.0%,#fff2ef 58.3%,#ffe4e1 66.7%,#ffd8d5 75.0%,#ffcdca 83.3%,#ffc2c0 91.7%,#ffb9b6 100.0%)"></div><div style="position:absolute;left:0;top:87.37px;width:100%;height:4.38px;background:linear-gradient(90deg,#aafffe 0.0%,#b8fffe 8.3%,#c5fffe 16.7%,#d4fffe 25.0%,#e2fffe 33.3%,#f1fffe 41.7%,#fffefd 50.0%,#fff0ef 58.3%,#ffe2e2 66.7%,#ffd6d5 75.0%,#ffcbca 83.3%,#ffc0c0 91.7%,#ffb7b6 100.0%)"></div><div style="position:absolute;left:0;top:91.35px;width:100%;height:4.38px;background:linear-gradient(90deg,#abfeff 0.0%,#b9feff 8.3%,#c6feff 16.7%,#d4fdff 25.0%,#e3fdff 33.3%,#f1fdff 41.7%,#fffcfd 50.0%,#ffedef 58.3%,#ffe0e2 66.7%,#ffd4d6 75.0%,#ffc9cb 83.3%,#ffbfc0 91.7%,#ffb5b7 100.0%)"></div><div style="position:absolute;left:0;top:95.33px;width:100%;height:4.38px;background:linear-gradient(90deg,#abfbff 0.0%,#b9fbff 8.3%,#c6fbff 16.7%,#d4fbff 25.0%,#e3fbff 33.3%,#f1fbff 41.7%,#fff9fe 50.0%,#ffebef 58.3%,#ffdee2 66.7%,#ffd2d6 75.0%,#ffc7cb 83.3%,#ffbdc1 91.7%,#ffb4b7 100.0%)"></div><div style="position:absolute;left:0;top:99.31px;width:100%;height:4.38px;background:linear-gradient(90deg,#acf9ff 0.0%,#b9f9ff 8.3%,#c6f9ff 16.7%,#d4f9ff 25.0%,#e3f8ff 33.3%,#f1f8ff 41.7%,#fff7fe 50.0%,#ffe9ef 58.3%,#ffdce2 66.7%,#ffd0d6 75.0%,#ffc5cb 83.3%,#ffbbc1 91.7%,#ffb2b7 100.0%)"></div><div style="position:absolute;left:0;top:103.29px;width:100%;height:4.38px;background:linear-gradient(90deg,#acf6ff 0.0%,#b9f6ff 8.3%,#c6f6ff 16.7%,#d4f6ff 25.0%,#e3f6ff 33.3%,#f1f6ff 41.7%,#fff5fe 50.0%,#ffe7f0 58.3%,#ffdae3 66.7%,#ffced7 75.0%,#ffc3cb 83.3%,#ffb9c1 91.7%,#ffb0b8 100.0%)"></div><div style="position:absolute;left:0;top:107.27px;width:100%;height:4.38px;background:linear-gradient(90deg,#acf4ff 0.0%,#b9f4ff 8.3%,#c6f4ff 16.7%,#d4f4ff 25.0%,#e2f3ff 33.3%,#f1f3ff 41.7%,#fff2fe 50.0%,#ffe5f0 58.3%,#ffd8e3 66.7%,#ffccd7 75.0%,#ffc2cc 83.3%,#ffb8c1 91.7%,#ffafb8 100.0%)"></div><div style="position:absolute;left:0;top:111.25px;width:100%;height:4.38px;background:linear-gradient(90deg,#acf2ff 0.0%,#b9f2ff 8.3%,#c7f1ff 16.7%,#d4f1ff 25.0%,#e2f1ff 33.3%,#f1f1ff 41.7%,#fff0fe 50.0%,#ffe2f0 58.3%,#ffd6e3 66.7%,#ffcad7 75.0%,#ffc0cc 83.3%,#ffb6c2 91.7%,#ffadb8 100.0%)"></div><div style="position:absolute;left:0;top:115.23px;width:100%;height:4.38px;background:linear-gradient(90deg,#acefff 0.0%,#b9efff 8.3%,#c7efff 16.7%,#d4efff 25.0%,#e2efff 33.3%,#f1eeff 41.7%,#ffeeff 50.0%,#ffe0f0 58.3%,#ffd4e3 66.7%,#ffc8d7 75.0%,#ffbecc 83.3%,#ffb4c2 91.7%,#ffabb9 100.0%)"></div><div style="position:absolute;left:0;top:119.21px;width:100%;height:4.38px;background:linear-gradient(90deg,#acedff 0.0%,#b9edff 8.3%,#c7edff 16.7%,#d4ecff 25.0%,#e2ecff 33.3%,#f1ecff 41.7%,#ffebff 50.0%,#ffdef1 58.3%,#ffd2e4 66.7%,#ffc7d8 75.0%,#ffbccd 83.3%,#ffb3c2 91.7%,#ffaab9 100.0%)"></div><div style="position:absolute;left:0;top:123.19px;width:100%;height:4.38px;background:linear-gradient(90deg,#acebff 0.0%,#b9ebff 8.3%,#c7eaff 16.7%,#d4eaff 25.0%,#e2eaff 33.3%,#f0eaff 41.7%,#ffe9ff 50.0%,#ffdcf1 58.3%,#ffd0e4 66.7%,#ffc5d8 75.0%,#ffbacd 83.3%,#ffb1c3 91.7%,#ffa8b9 100.0%)"></div><div style="position:absolute;left:0;top:127.17px;width:100%;height:4.38px;background:linear-gradient(90deg,#ade9ff 0.0%,#b9e8ff 8.3%,#c7e8ff 16.7%,#d4e8ff 25.0%,#e2e7ff 33.3%,#f0e7ff 41.7%,#ffe7ff 50.0%,#ffdaf1 58.3%,#ffcee4 66.7%,#ffc3d8 75.0%,#ffb9cd 83.3%,#ffafc3 91.7%,#ffa6ba 100.0%)"></div><div style="position:absolute;left:0;top:131.15px;width:100%;height:4.38px;background:linear-gradient(90deg,#ade6ff 0.0%,#bae6ff 8.3%,#c7e6ff 16.7%,#d4e5ff 25.0%,#e2e5ff 33.3%,#f0e5ff 41.7%,#ffe4ff 50.0%,#ffd8f1 58.3%,#ffcce4 66.7%,#ffc1d8 75.0%,#ffb7cd 83.3%,#ffaec3 91.7%,#ffa5ba 100.0%)"></div><div style="position:absolute;left:0;top:135.13px;width:100%;height:4.38px;background:linear-gradient(90deg,#ade4ff 0.0%,#bae4ff 8.3%,#c7e4ff 16.7%,#d4e3ff 25.0%,#e2e3ff 33.3%,#f0e2ff 41.7%,#ffe2ff 50.0%,#ffd6f1 58.3%,#ffcae5 66.7%,#ffbfd9 75.0%,#ffb5ce 83.3%,#ffacc4 91.7%,#ffa3ba 100.0%)"></div><div style="position:absolute;left:0;top:139.12px;width:100%;height:4.38px;background:linear-gradient(90deg,#ade2ff 0.0%,#bae2ff 8.3%,#c7e1ff 16.7%,#d4e1ff 25.0%,#e2e0ff 33.3%,#f0e0ff 41.7%,#fee0ff 50.0%,#ffd4f2 58.3%,#ffc8e5 66.7%,#ffbdd9 75.0%,#ffb3ce 83.3%,#ffaac4 91.7%,#ffa2bb 100.0%)"></div><div style="position:absolute;left:0;top:143.10px;width:100%;height:4.38px;background:linear-gradient(90deg,#ade0ff 0.0%,#badfff 8.3%,#c7dfff 16.7%,#d4dfff 25.0%,#e2deff 33.3%,#f0deff 41.7%,#feddff 50.0%,#ffd2f2 58.3%,#ffc6e5 66.7%,#ffbbd9 75.0%,#ffb2ce 83.3%,#ffa9c4 91.7%,#ffa0bb 100.0%)"></div><div style="position:absolute;left:0;top:147.08px;width:100%;height:4.38px;background:linear-gradient(90deg,#addeff 0.0%,#baddff 8.3%,#c7ddff 16.7%,#d4dcff 25.0%,#e2dcff 33.3%,#f0dbff 41.7%,#fedbff 50.0%,#ffcff2 58.3%,#ffc4e5 66.7%,#ffbad9 75.0%,#ffb0cf 83.3%,#ffa7c5 91.7%,#ff9fbb 100.0%)"></div><div style="position:absolute;left:0;top:151.06px;width:100%;height:4.38px;background:linear-gradient(90deg,#addbff 0.0%,#badbff 8.3%,#c7dbff 16.7%,#d4daff 25.0%,#e2daff 33.3%,#f0d9ff 41.7%,#fed9ff 50.0%,#ffcdf2 58.3%,#ffc2e5 66.7%,#ffb8da 75.0%,#ffaecf 83.3%,#ffa5c5 91.7%,#ff9dbc 100.0%)"></div><div style="position:absolute;left:0;top:155.04px;width:100%;height:4.38px;background:linear-gradient(90deg,#add9ff 0.0%,#bad9ff 8.3%,#c7d8ff 16.7%,#d4d8ff 25.0%,#e2d7ff 33.3%,#f0d7ff 41.7%,#fed6ff 50.0%,#ffcbf2 58.3%,#ffc0e6 66.7%,#ffb6da 75.0%,#ffaccf 83.3%,#ffa4c5 91.7%,#ff9cbc 100.0%)"></div><div style="position:absolute;left:0;top:159.02px;width:100%;height:4.38px;background:linear-gradient(90deg,#aed7ff 0.0%,#bad7ff 8.3%,#c7d6ff 16.7%,#d4d6ff 25.0%,#e2d5ff 33.3%,#efd5ff 41.7%,#fed4ff 50.0%,#ffc9f3 58.3%,#ffbee6 66.7%,#ffb4da 75.0%,#ffabcf 83.3%,#ffa2c5 91.7%,#ff9abc 100.0%)"></div><div style="position:absolute;left:0;top:163.00px;width:100%;height:4.38px;background:linear-gradient(90deg,#aed5ff 0.0%,#bad5ff 8.3%,#c7d4ff 16.7%,#d4d4ff 25.0%,#e2d3ff 33.3%,#efd2ff 41.7%,#fdd2ff 50.0%,#ffc7f3 58.3%,#ffbce6 66.7%,#ffb2db 75.0%,#ffa9d0 83.3%,#ffa0c6 91.7%,#ff98bc 100.0%)"></div><div style="position:absolute;left:0;top:166.98px;width:100%;height:4.38px;background:linear-gradient(90deg,#aed3ff 0.0%,#bad2ff 8.3%,#c7d2ff 16.7%,#d4d1ff 25.0%,#e2d1ff 33.3%,#efd0ff 41.7%,#fdd0ff 50.0%,#ffc5f3 58.3%,#ffbbe6 66.7%,#ffb1db 75.0%,#ffa7d0 83.3%,#ff9fc6 91.7%,#ff97bd 100.0%)"></div><div style="position:absolute;left:0;top:170.96px;width:100%;height:4.38px;background:linear-gradient(90deg,#aed1ff 0.0%,#bad0ff 8.3%,#c7d0ff 16.7%,#d4cfff 25.0%,#e1cfff 33.3%,#efceff 41.7%,#fdcdff 50.0%,#ffc3f3 58.3%,#ffb9e7 66.7%,#ffafdb 75.0%,#ffa6d0 83.3%,#ff9dc6 91.7%,#ff95bd 100.0%)"></div><div style="position:absolute;left:0;top:174.94px;width:100%;height:4.38px;background:linear-gradient(90deg,#aecfff 0.0%,#bbceff 8.3%,#c7ceff 16.7%,#d4cdff 25.0%,#e1ccff 33.3%,#efccff 41.7%,#fdcbff 50.0%,#ffc1f3 58.3%,#ffb7e7 66.7%,#ffaddb 75.0%,#ffa4d1 83.3%,#ff9cc7 91.7%,#ff94bd 100.0%)"></div><div style="position:absolute;left:0;top:178.92px;width:100%;height:4.38px;background:linear-gradient(90deg,#aecdff 0.0%,#bbccff 8.3%,#c7ccff 16.7%,#d4cbff 25.0%,#e1caff 33.3%,#efcaff 41.7%,#fdc9ff 50.0%,#ffc0f4 58.3%,#ffb5e7 66.7%,#ffabdc 75.0%,#ffa2d1 83.3%,#ff9ac7 91.7%,#ff92be 100.0%)"></div></div>
<svg width="1920" height="1039" viewBox="0 0 1920 1039"><defs><clipPath id="ciec"><rect x="472.7" y="748.4" width="253.5" height="183.1"/></clipPath></defs><g clip-path="url(#ciec)"><polyline points="790.5,739.6 782.8,743.9 775.3,748.1 767.9,752.3 760.7,756.5 753.7,760.6 746.8,764.6 740.0,768.6 733.4,772.6 726.9,776.4 720.6,780.3 714.4,784.1 708.3,787.8 702.4,791.5 696.5,795.2 690.8,798.8 685.2,802.3 679.7,805.9 674.4,809.3 669.1,812.7 663.9,816.1 658.9,819.5 653.9,822.7 649.0,826.0 644.2,829.2 639.5,832.3 634.9,835.5 630.4,838.5 626.0,841.6 621.6,844.6 617.3,847.5 613.2,850.4 609.0,853.3 605.0,856.2 601.0,859.0 597.1,861.7 593.3,864.5 589.5,867.1 585.8,869.8 582.2,872.4 578.6,875.0 575.1,877.6 571.6,880.1 568.3,882.6 564.9,885.1 561.6,887.5 558.4,889.9 555.2,892.2 552.1,894.6 549.0,896.9 546.0,899.2 543.1,901.4 540.1,903.6 537.3,905.8 534.4,908.0 531.6,910.1 528.9,912.2 526.2,914.3 523.5,916.3 520.9,918.4 518.3,920.4 515.8,922.4 513.3,924.3 510.9,926.3 508.4,928.2 506.0,930.0 503.7,931.9 501.4,933.8 499.1,935.6 496.8,937.4 494.6,939.1 492.4,940.9 490.3,942.6 488.1,944.3 486.0,946.0 484.0,947.7 481.9,949.4 479.9,951.0 478.0,952.6 476.0,954.2 474.1,955.8 472.2,957.3 470.3,958.9 468.5,960.4 466.6,961.9 464.8,963.4 463.1,964.9 461.3,966.3 459.6,967.7 457.9,969.2 456.2,970.6 454.5,972.0 452.9,973.3 451.3,974.7" fill="none" stroke="#000" stroke-width="3"/></g><rect x="590.800" y="832.600" width="11.600" height="13.400" fill="none" stroke="#1a1a1a" stroke-width="1.300"/><circle cx="602.1" cy="824.7" r="4.500" fill="#555555" stroke="#151515" stroke-width="1"/><circle cx="608.3" cy="841.4" r="4.500" fill="#222222" stroke="#151515" stroke-width="1"/><circle cx="603.7" cy="848.3" r="4.500" fill="#383838" stroke="#151515" stroke-width="1"/><circle cx="598" cy="838" r="4.500" fill="#cfcfcf" stroke="#151515" stroke-width="1"/><circle cx="599.1" cy="832.4" r="4.500" fill="#ffffff" stroke="#151515" stroke-width="1"/><path d="M465.200 762.3 H471.500" stroke="#e8e8e8" stroke-width="1.200"/><path d="M465.200 799.3 H471.500" stroke="#e8e8e8" stroke-width="1.200"/><path d="M465.200 836.7 H471.500" stroke="#e8e8e8" stroke-width="1.200"/><path d="M465.200 872.8 H471.500" stroke="#e8e8e8" stroke-width="1.200"/><path d="M465.200 909.1 H471.500" stroke="#e8e8e8" stroke-width="1.200"/><path d="M481.9 932.200 V937.500" stroke="#e8e8e8" stroke-width="1.200"/><path d="M532.5 932.200 V937.500" stroke="#e8e8e8" stroke-width="1.200"/><path d="M583.6 932.200 V937.500" stroke="#e8e8e8" stroke-width="1.200"/><path d="M634.4 932.200 V937.500" stroke="#e8e8e8" stroke-width="1.200"/><path d="M684.8 932.200 V937.500" stroke="#e8e8e8" stroke-width="1.200"/></svg>
<div class="t" style="left:434.87px;top:755.20px;font-size:15px;line-height:15px;color:#dedede;letter-spacing:0.074px;">0,35</div>
<div class="t" style="left:434.87px;top:792.20px;font-size:15px;line-height:15px;color:#dedede;letter-spacing:0.074px;">0,34</div>
<div class="t" style="left:434.87px;top:829.60px;font-size:15px;line-height:15px;color:#dedede;letter-spacing:0.074px;">0,33</div>
<div class="t" style="left:434.87px;top:865.70px;font-size:15px;line-height:15px;color:#dedede;letter-spacing:0.074px;">0,32</div>
<div class="t" style="left:434.87px;top:902.00px;font-size:15px;line-height:15px;color:#dedede;letter-spacing:0.074px;">0,31</div>
<div class="t" style="left:467.19px;top:940.90px;font-size:15px;line-height:15px;color:#dedede;letter-spacing:0.074px;">0,29</div>
<div class="t" style="left:522.02px;top:940.90px;font-size:15px;line-height:15px;color:#dedede;letter-spacing:0.047px;">0,3</div>
<div class="t" style="left:568.89px;top:940.90px;font-size:15px;line-height:15px;color:#dedede;letter-spacing:0.074px;">0,31</div>
<div class="t" style="left:619.69px;top:940.90px;font-size:15px;line-height:15px;color:#dedede;letter-spacing:0.074px;">0,32</div>
<div class="t" style="left:670.09px;top:940.90px;font-size:15px;line-height:15px;color:#dedede;letter-spacing:0.074px;">0,33</div>
<div class="b " style="left:744px;top:723px;width:919.5px;height:222.9px;background:#161616;"></div>
<div class="b " style="left:745px;top:724px;width:917.5px;height:30.5px;background:linear-gradient(180deg,#303030 0%,#282828 47%,#0c0c0c 52%,#121212 70%,#262626 100%);"></div>
<div class="t" style="left:936.33px;top:732.98px;font-size:16.8px;line-height:16.8px;color:#f0f0f0;letter-spacing:-0.014px;">0</div>
<div class="t" style="left:1000.37px;top:732.98px;font-size:16.8px;line-height:16.8px;color:#f0f0f0;letter-spacing:-0.006px;">10</div>
<div class="t" style="left:1069.07px;top:732.98px;font-size:16.8px;line-height:16.8px;color:#f0f0f0;letter-spacing:-0.006px;">20</div>
<div class="t" style="left:1137.77px;top:732.98px;font-size:16.8px;line-height:16.8px;color:#f0f0f0;letter-spacing:-0.006px;">30</div>
<div class="t" style="left:1206.47px;top:732.98px;font-size:16.8px;line-height:16.8px;color:#f0f0f0;letter-spacing:-0.006px;">40</div>
<div class="t" style="left:1275.17px;top:732.98px;font-size:16.8px;line-height:16.8px;color:#f0f0f0;letter-spacing:-0.006px;">50</div>
<div class="t" style="left:1343.87px;top:732.98px;font-size:16.8px;line-height:16.8px;color:#f0f0f0;letter-spacing:-0.006px;">60</div>
<div class="t" style="left:1412.57px;top:732.98px;font-size:16.8px;line-height:16.8px;color:#f0f0f0;letter-spacing:-0.006px;">70</div>
<div class="t" style="left:1481.27px;top:732.98px;font-size:16.8px;line-height:16.8px;color:#f0f0f0;letter-spacing:-0.006px;">80</div>
<div class="t" style="left:1549.97px;top:732.98px;font-size:16.8px;line-height:16.8px;color:#f0f0f0;letter-spacing:-0.006px;">90</div>
<div class="t" style="left:1614.00px;top:732.98px;font-size:16.8px;line-height:16.8px;color:#f0f0f0;">100</div>
<div class="b " style="left:745px;top:754.3px;width:917.5px;height:26.3px;background:#3c3c3c;"></div>
<div class="t" style="left:757.50px;top:761.58px;font-size:16.8px;line-height:16.8px;color:#f4f4f4;font-weight:700;letter-spacing:-0.154px;">x: CIE31</div>
<div class="t" style="left:911.20px;top:761.58px;font-size:16.8px;line-height:16.8px;color:#f4f4f4;letter-spacing:-0.170px;">0,32</div>
<div class="t" style="left:979.90px;top:761.58px;font-size:16.8px;line-height:16.8px;color:#f4f4f4;letter-spacing:-0.170px;">0,31</div>
<div class="t" style="left:1048.60px;top:761.58px;font-size:16.8px;line-height:16.8px;color:#f4f4f4;letter-spacing:-0.170px;">0,31</div>
<div class="t" style="left:1117.30px;top:761.58px;font-size:16.8px;line-height:16.8px;color:#f4f4f4;letter-spacing:-0.170px;">0,31</div>
<div class="t" style="left:1186.00px;top:761.58px;font-size:16.8px;line-height:16.8px;color:#f4f4f4;letter-spacing:-0.170px;">0,31</div>
<div class="t" style="left:1254.70px;top:761.58px;font-size:16.8px;line-height:16.8px;color:#f4f4f4;letter-spacing:-0.170px;">0,31</div>
<div class="t" style="left:1323.40px;top:761.58px;font-size:16.8px;line-height:16.8px;color:#f4f4f4;letter-spacing:-0.170px;">0,31</div>
<div class="t" style="left:1392.10px;top:761.58px;font-size:16.8px;line-height:16.8px;color:#f4f4f4;letter-spacing:-0.170px;">0,31</div>
<div class="t" style="left:1460.80px;top:761.58px;font-size:16.8px;line-height:16.8px;color:#f4f4f4;letter-spacing:-0.170px;">0,31</div>
<div class="t" style="left:1529.50px;top:761.58px;font-size:16.8px;line-height:16.8px;color:#f4f4f4;letter-spacing:-0.170px;">0,31</div>
<div class="t" style="left:1598.20px;top:761.58px;font-size:16.8px;line-height:16.8px;color:#f4f4f4;letter-spacing:-0.170px;">0,31</div>
<div class="b " style="left:745px;top:780.6px;width:917.5px;height:28.7px;background:#767676;"></div>
<div class="t" style="left:757.50px;top:789.00px;font-size:16.8px;line-height:16.8px;color:#f4f4f4;font-weight:700;letter-spacing:-0.154px;">y: CIE31</div>
<div class="t" style="left:911.20px;top:789.00px;font-size:16.8px;line-height:16.8px;color:#f4f4f4;letter-spacing:-0.170px;">0,30</div>
<div class="t" style="left:979.90px;top:789.00px;font-size:16.8px;line-height:16.8px;color:#f4f4f4;letter-spacing:-0.170px;">0,33</div>
<div class="t" style="left:1048.60px;top:789.00px;font-size:16.8px;line-height:16.8px;color:#f4f4f4;letter-spacing:-0.170px;">0,33</div>
<div class="t" style="left:1117.30px;top:789.00px;font-size:16.8px;line-height:16.8px;color:#f4f4f4;letter-spacing:-0.170px;">0,33</div>
<div class="t" style="left:1186.00px;top:789.00px;font-size:16.8px;line-height:16.8px;color:#f4f4f4;letter-spacing:-0.170px;">0,33</div>
<div class="t" style="left:1254.70px;top:789.00px;font-size:16.8px;line-height:16.8px;color:#f4f4f4;letter-spacing:-0.170px;">0,33</div>
<div class="t" style="left:1323.40px;top:789.00px;font-size:16.8px;line-height:16.8px;color:#f4f4f4;letter-spacing:-0.170px;">0,33</div>
<div class="t" style="left:1392.10px;top:789.00px;font-size:16.8px;line-height:16.8px;color:#f4f4f4;letter-spacing:-0.170px;">0,33</div>
<div class="t" style="left:1460.80px;top:789.00px;font-size:16.8px;line-height:16.8px;color:#f4f4f4;letter-spacing:-0.170px;">0,33</div>
<div class="t" style="left:1529.50px;top:789.00px;font-size:16.8px;line-height:16.8px;color:#f4f4f4;letter-spacing:-0.170px;">0,33</div>
<div class="t" style="left:1598.20px;top:789.00px;font-size:16.8px;line-height:16.8px;color:#f4f4f4;letter-spacing:-0.170px;">0,33</div>
<div class="b " style="left:745px;top:809.3px;width:917.5px;height:26.3px;background:#3c3c3c;"></div>
<div class="t" style="left:757.50px;top:816.42px;font-size:16.8px;line-height:16.8px;color:#f4f4f4;font-weight:700;letter-spacing:0.297px;">Y</div>
<div class="t" style="left:911.20px;top:816.42px;font-size:16.8px;line-height:16.8px;color:#f4f4f4;letter-spacing:-0.170px;">0,20</div>
<div class="t" style="left:979.90px;top:816.42px;font-size:16.8px;line-height:16.8px;color:#f4f4f4;letter-spacing:-0.170px;">2,39</div>
<div class="t" style="left:1048.60px;top:816.42px;font-size:16.8px;line-height:16.8px;color:#f4f4f4;letter-spacing:-0.170px;">9,73</div>
<div class="t" style="left:1117.30px;top:816.42px;font-size:16.8px;line-height:16.8px;color:#f4f4f4;letter-spacing:-0.136px;">23,70</div>
<div class="t" style="left:1186.00px;top:816.42px;font-size:16.8px;line-height:16.8px;color:#f4f4f4;letter-spacing:-0.136px;">43,92</div>
<div class="t" style="left:1254.70px;top:816.42px;font-size:16.8px;line-height:16.8px;color:#f4f4f4;letter-spacing:-0.136px;">72,07</div>
<div class="t" style="left:1323.40px;top:816.42px;font-size:16.8px;line-height:16.8px;color:#f4f4f4;letter-spacing:-0.113px;">107,76</div>
<div class="t" style="left:1392.10px;top:816.42px;font-size:16.8px;line-height:16.8px;color:#f4f4f4;letter-spacing:-0.113px;">149,01</div>
<div class="t" style="left:1460.80px;top:816.42px;font-size:16.8px;line-height:16.8px;color:#f4f4f4;letter-spacing:-0.113px;">200,13</div>
<div class="t" style="left:1529.50px;top:816.42px;font-size:16.8px;line-height:16.8px;color:#f4f4f4;letter-spacing:-0.113px;">259,08</div>
<div class="t" style="left:1598.20px;top:816.42px;font-size:16.8px;line-height:16.8px;color:#f4f4f4;letter-spacing:-0.113px;">327,88</div>
<div class="b " style="left:745px;top:835.6px;width:917.5px;height:28.7px;background:#767676;"></div>
<div class="t" style="left:757.50px;top:843.84px;font-size:16.8px;line-height:16.8px;color:#f4f4f4;font-weight:700;letter-spacing:0.363px;">Target Y</div>
<div class="t" style="left:911.20px;top:843.84px;font-size:16.8px;line-height:16.8px;color:#f4f4f4;letter-spacing:-0.170px;">0,00</div>
<div class="t" style="left:979.90px;top:843.84px;font-size:16.8px;line-height:16.8px;color:#f4f4f4;letter-spacing:-0.170px;">3,39</div>
<div class="t" style="left:1048.60px;top:843.84px;font-size:16.8px;line-height:16.8px;color:#f4f4f4;letter-spacing:-0.136px;">10,85</div>
<div class="t" style="left:1117.30px;top:843.84px;font-size:16.8px;line-height:16.8px;color:#f4f4f4;letter-spacing:-0.136px;">23,70</div>
<div class="t" style="left:1186.00px;top:843.84px;font-size:16.8px;line-height:16.8px;color:#f4f4f4;letter-spacing:-0.136px;">43,56</div>
<div class="t" style="left:1254.70px;top:843.84px;font-size:16.8px;line-height:16.8px;color:#f4f4f4;letter-spacing:-0.136px;">70,78</div>
<div class="t" style="left:1323.40px;top:843.84px;font-size:16.8px;line-height:16.8px;color:#f4f4f4;letter-spacing:-0.113px;">104,44</div>
<div class="t" style="left:1392.10px;top:843.84px;font-size:16.8px;line-height:16.8px;color:#f4f4f4;letter-spacing:-0.113px;">145,97</div>
<div class="t" style="left:1460.80px;top:843.84px;font-size:16.8px;line-height:16.8px;color:#f4f4f4;letter-spacing:-0.113px;">197,98</div>
<div class="t" style="left:1529.50px;top:843.84px;font-size:16.8px;line-height:16.8px;color:#f4f4f4;letter-spacing:-0.113px;">259,45</div>
<div class="t" style="left:1598.20px;top:843.84px;font-size:16.8px;line-height:16.8px;color:#f4f4f4;letter-spacing:-0.113px;">327,88</div>
<div class="b " style="left:745px;top:864.3px;width:917.5px;height:26.3px;background:#3c3c3c;"></div>
<div class="t" style="left:757.50px;top:871.26px;font-size:16.8px;line-height:16.8px;color:#f4f4f4;font-weight:700;letter-spacing:0.393px;">Gamma Log/Log</div>
<div class="t" style="left:911.20px;top:871.26px;font-size:16.8px;line-height:16.8px;color:#f4f4f4;letter-spacing:-0.170px;">1,28</div>
<div class="t" style="left:979.90px;top:871.26px;font-size:16.8px;line-height:16.8px;color:#f4f4f4;letter-spacing:-0.170px;">2,15</div>
<div class="t" style="left:1048.60px;top:871.26px;font-size:16.8px;line-height:16.8px;color:#f4f4f4;letter-spacing:-0.170px;">2,19</div>
<div class="t" style="left:1117.30px;top:871.26px;font-size:16.8px;line-height:16.8px;color:#f4f4f4;letter-spacing:-0.170px;">2,17</div>
<div class="t" style="left:1186.00px;top:871.26px;font-size:16.8px;line-height:16.8px;color:#f4f4f4;letter-spacing:-0.170px;">2,19</div>
<div class="t" style="left:1254.70px;top:871.26px;font-size:16.8px;line-height:16.8px;color:#f4f4f4;letter-spacing:-0.170px;">2,20</div>
<div class="t" style="left:1323.40px;top:871.26px;font-size:16.8px;line-height:16.8px;color:#f4f4f4;letter-spacing:-0.170px;">2,18</div>
<div class="t" style="left:1392.10px;top:871.26px;font-size:16.8px;line-height:16.8px;color:#f4f4f4;letter-spacing:-0.170px;">2,19</div>
<div class="t" style="left:1460.80px;top:871.26px;font-size:16.8px;line-height:16.8px;color:#f4f4f4;letter-spacing:-0.170px;">2,21</div>
<div class="t" style="left:1529.50px;top:871.26px;font-size:16.8px;line-height:16.8px;color:#f4f4f4;letter-spacing:-0.170px;">2,28</div>
<div class="t" style="left:1598.20px;top:871.26px;font-size:16.8px;line-height:16.8px;color:#f4f4f4;letter-spacing:-0.170px;">2,27</div>
<div class="b " style="left:745px;top:890.6px;width:917.5px;height:28.7px;background:#767676;"></div>
<div class="t" style="left:757.50px;top:898.68px;font-size:16.8px;line-height:16.8px;color:#f4f4f4;font-weight:700;letter-spacing:-0.667px;">CCT</div>
<div class="t" style="left:911.20px;top:898.68px;font-size:16.8px;line-height:16.8px;color:#f4f4f4;letter-spacing:-0.099px;">6606,00</div>
<div class="t" style="left:979.90px;top:898.68px;font-size:16.8px;line-height:16.8px;color:#f4f4f4;letter-spacing:-0.099px;">6401,00</div>
<div class="t" style="left:1048.60px;top:898.68px;font-size:16.8px;line-height:16.8px;color:#f4f4f4;letter-spacing:-0.099px;">6449,00</div>
<div class="t" style="left:1117.30px;top:898.68px;font-size:16.8px;line-height:16.8px;color:#f4f4f4;letter-spacing:-0.099px;">6431,00</div>
<div class="t" style="left:1186.00px;top:898.68px;font-size:16.8px;line-height:16.8px;color:#f4f4f4;letter-spacing:-0.099px;">6450,00</div>
<div class="t" style="left:1254.70px;top:898.68px;font-size:16.8px;line-height:16.8px;color:#f4f4f4;letter-spacing:-0.099px;">6513,00</div>
<div class="t" style="left:1323.40px;top:898.68px;font-size:16.8px;line-height:16.8px;color:#f4f4f4;letter-spacing:-0.099px;">6467,00</div>
<div class="t" style="left:1392.10px;top:898.68px;font-size:16.8px;line-height:16.8px;color:#f4f4f4;letter-spacing:-0.099px;">6492,00</div>
<div class="t" style="left:1460.80px;top:898.68px;font-size:16.8px;line-height:16.8px;color:#f4f4f4;letter-spacing:-0.099px;">6499,00</div>
<div class="t" style="left:1529.50px;top:898.68px;font-size:16.8px;line-height:16.8px;color:#f4f4f4;letter-spacing:-0.099px;">6500,00</div>
<div class="t" style="left:1598.20px;top:898.68px;font-size:16.8px;line-height:16.8px;color:#f4f4f4;letter-spacing:-0.099px;">6467,00</div>
<div class="b " style="left:745px;top:919.3px;width:917.5px;height:26.5px;background:#3c3c3c;"></div>
<div class="t" style="left:757.50px;top:926.10px;font-size:16.8px;line-height:16.8px;color:#f4f4f4;font-weight:700;letter-spacing:0.321px;">ΔE 2000</div>
<div class="t" style="left:911.20px;top:926.10px;font-size:16.8px;line-height:16.8px;color:#f4f4f4;letter-spacing:-0.170px;">0,53</div>
<div class="t" style="left:979.90px;top:926.10px;font-size:16.8px;line-height:16.8px;color:#f4f4f4;letter-spacing:-0.170px;">1,68</div>
<div class="t" style="left:1048.60px;top:926.10px;font-size:16.8px;line-height:16.8px;color:#f4f4f4;letter-spacing:-0.170px;">1,29</div>
<div class="t" style="left:1117.30px;top:926.10px;font-size:16.8px;line-height:16.8px;color:#f4f4f4;letter-spacing:-0.170px;">1,13</div>
<div class="t" style="left:1186.00px;top:926.10px;font-size:16.8px;line-height:16.8px;color:#f4f4f4;letter-spacing:-0.170px;">0,29</div>
<div class="t" style="left:1254.70px;top:926.10px;font-size:16.8px;line-height:16.8px;color:#f4f4f4;letter-spacing:-0.170px;">0,45</div>
<div class="t" style="left:1323.40px;top:926.10px;font-size:16.8px;line-height:16.8px;color:#f4f4f4;letter-spacing:-0.170px;">1,07</div>
<div class="t" style="left:1392.10px;top:926.10px;font-size:16.8px;line-height:16.8px;color:#f4f4f4;letter-spacing:-0.170px;">0,56</div>
<div class="t" style="left:1460.80px;top:926.10px;font-size:16.8px;line-height:16.8px;color:#f4f4f4;letter-spacing:-0.170px;">0,25</div>
<div class="t" style="left:1529.50px;top:926.10px;font-size:16.8px;line-height:16.8px;color:#f4f4f4;letter-spacing:-0.170px;">0,28</div>
<div class="t" style="left:1598.20px;top:926.10px;font-size:16.8px;line-height:16.8px;color:#f4f4f4;letter-spacing:-0.170px;">1,18</div>
<div class="b " style="left:0px;top:968px;width:1920px;height:71px;background:#2b2b2b;"></div>
<div class="b " style="left:1.4px;top:968.5px;width:139.8px;height:68.8px;background:linear-gradient(180deg,#a6a6a6 0%,#949494 6%,#8a8a8a 40%,#5e5e5e 100%);border-radius:5px;box-shadow:inset 1.5px 0 0 rgba(170,170,170,0.55),inset -1.5px 0 0 rgba(170,170,170,0.55);"></div>
<div class="b " style="left:7.2px;top:974.8px;width:128.2px;height:40.6px;background:#000000;border-radius:3.5px;box-shadow:inset 0 1px 1px rgba(0,0,0,0.25),0 0 0 0.6px rgba(90,90,90,0.5);"></div>
<div class="t" style="left:67.99px;top:1023.56px;font-size:10.8px;line-height:10.8px;color:#262626;font-weight:700;letter-spacing:0.884px;">0</div>
<div class="b " style="left:143.27px;top:968.5px;width:139.8px;height:68.8px;background:linear-gradient(180deg,#a6a6a6 0%,#949494 6%,#8a8a8a 40%,#5e5e5e 100%);border-radius:5px;box-shadow:inset 1.5px 0 0 rgba(170,170,170,0.55),inset -1.5px 0 0 rgba(170,170,170,0.55);"></div>
<div class="b " style="left:149.07px;top:974.8px;width:128.2px;height:40.6px;background:#1a1a1a;border-radius:3.5px;box-shadow:inset 0 1px 1px rgba(0,0,0,0.25),0 0 0 0.6px rgba(90,90,90,0.5);"></div>
<div class="t" style="left:206.42px;top:1023.56px;font-size:10.8px;line-height:10.8px;color:#262626;font-weight:700;letter-spacing:0.892px;">10</div>
<div class="b " style="left:285.14px;top:968.5px;width:139.8px;height:68.8px;background:linear-gradient(180deg,#a6a6a6 0%,#949494 6%,#8a8a8a 40%,#5e5e5e 100%);border-radius:5px;box-shadow:inset 1.5px 0 0 rgba(170,170,170,0.55),inset -1.5px 0 0 rgba(170,170,170,0.55);"></div>
<div class="b " style="left:290.94px;top:974.8px;width:128.2px;height:40.6px;background:#333333;border-radius:3.5px;box-shadow:inset 0 1px 1px rgba(0,0,0,0.25),0 0 0 0.6px rgba(90,90,90,0.5);"></div>
<div class="t" style="left:348.29px;top:1023.56px;font-size:10.8px;line-height:10.8px;color:#262626;font-weight:700;letter-spacing:0.892px;">20</div>
<div class="b " style="left:427.01px;top:968.5px;width:139.8px;height:68.8px;background:linear-gradient(180deg,#a6a6a6 0%,#949494 6%,#8a8a8a 40%,#5e5e5e 100%);border-radius:5px;box-shadow:inset 1.5px 0 0 rgba(170,170,170,0.55),inset -1.5px 0 0 rgba(170,170,170,0.55);"></div>
<div class="b " style="left:432.81px;top:974.8px;width:128.2px;height:40.6px;background:#4d4d4d;border-radius:3.5px;box-shadow:inset 0 1px 1px rgba(0,0,0,0.25),0 0 0 0.6px rgba(90,90,90,0.5);"></div>
<div class="t" style="left:490.16px;top:1023.56px;font-size:10.8px;line-height:10.8px;color:#262626;font-weight:700;letter-spacing:0.892px;">30</div>
<div class="b " style="left:568.88px;top:968.5px;width:139.8px;height:68.8px;background:linear-gradient(180deg,#a6a6a6 0%,#949494 6%,#8a8a8a 40%,#5e5e5e 100%);border-radius:5px;box-shadow:inset 1.5px 0 0 rgba(170,170,170,0.55),inset -1.5px 0 0 rgba(170,170,170,0.55);"></div>
<div class="b " style="left:574.68px;top:974.8px;width:128.2px;height:40.6px;background:#666666;border-radius:3.5px;box-shadow:inset 0 1px 1px rgba(0,0,0,0.25),0 0 0 0.6px rgba(90,90,90,0.5);"></div>
<div class="t" style="left:632.03px;top:1023.56px;font-size:10.8px;line-height:10.8px;color:#262626;font-weight:700;letter-spacing:0.892px;">40</div>
<div class="b " style="left:710.75px;top:968.5px;width:139.8px;height:68.8px;background:linear-gradient(180deg,#a6a6a6 0%,#949494 6%,#8a8a8a 40%,#5e5e5e 100%);border-radius:5px;box-shadow:inset 1.5px 0 0 rgba(170,170,170,0.55),inset -1.5px 0 0 rgba(170,170,170,0.55);"></div>
<div class="b " style="left:716.55px;top:974.8px;width:128.2px;height:40.6px;background:#808080;border-radius:3.5px;box-shadow:inset 0 1px 1px rgba(0,0,0,0.25),0 0 0 0.6px rgba(90,90,90,0.5);"></div>
<div class="t" style="left:773.90px;top:1023.56px;font-size:10.8px;line-height:10.8px;color:#262626;font-weight:700;letter-spacing:0.892px;">50</div>
<div class="b " style="left:852.62px;top:968.5px;width:139.8px;height:68.8px;background:linear-gradient(180deg,#a6a6a6 0%,#949494 6%,#8a8a8a 40%,#5e5e5e 100%);border-radius:5px;box-shadow:inset 1.5px 0 0 rgba(170,170,170,0.55),inset -1.5px 0 0 rgba(170,170,170,0.55);"></div>
<div class="b " style="left:858.42px;top:974.8px;width:128.2px;height:40.6px;background:#999999;border-radius:3.5px;box-shadow:inset 0 1px 1px rgba(0,0,0,0.25),0 0 0 0.6px rgba(90,90,90,0.5);"></div>
<div class="t" style="left:915.77px;top:1023.56px;font-size:10.8px;line-height:10.8px;color:#262626;font-weight:700;letter-spacing:0.892px;">60</div>
<div class="b " style="left:994.49px;top:968.5px;width:139.8px;height:68.8px;background:linear-gradient(180deg,#a6a6a6 0%,#949494 6%,#8a8a8a 40%,#5e5e5e 100%);border-radius:5px;box-shadow:inset 1.5px 0 0 rgba(170,170,170,0.55),inset -1.5px 0 0 rgba(170,170,170,0.55);"></div>
<div class="b " style="left:1000.29px;top:974.8px;width:128.2px;height:40.6px;background:#b3b3b3;border-radius:3.5px;box-shadow:inset 0 1px 1px rgba(0,0,0,0.25),0 0 0 0.6px rgba(90,90,90,0.5);"></div>
<div class="t" style="left:1057.64px;top:1023.56px;font-size:10.8px;line-height:10.8px;color:#262626;font-weight:700;letter-spacing:0.892px;">70</div>
<div class="b " style="left:1136.36px;top:968.5px;width:139.8px;height:68.8px;background:linear-gradient(180deg,#a6a6a6 0%,#949494 6%,#8a8a8a 40%,#5e5e5e 100%);border-radius:5px;box-shadow:inset 1.5px 0 0 rgba(170,170,170,0.55),inset -1.5px 0 0 rgba(170,170,170,0.55);"></div>
<div class="b " style="left:1142.16px;top:974.8px;width:128.2px;height:40.6px;background:#cccccc;border-radius:3.5px;box-shadow:inset 0 1px 1px rgba(0,0,0,0.25),0 0 0 0.6px rgba(90,90,90,0.5);"></div>
<div class="t" style="left:1199.51px;top:1023.56px;font-size:10.8px;line-height:10.8px;color:#262626;font-weight:700;letter-spacing:0.892px;">80</div>
<div class="b " style="left:1278.23px;top:968.5px;width:139.8px;height:68.8px;background:linear-gradient(180deg,#a6a6a6 0%,#949494 6%,#8a8a8a 40%,#5e5e5e 100%);border-radius:5px;box-shadow:inset 1.5px 0 0 rgba(170,170,170,0.55),inset -1.5px 0 0 rgba(170,170,170,0.55);"></div>
<div class="b " style="left:1284.03px;top:974.8px;width:128.2px;height:40.6px;background:#e6e6e6;border-radius:3.5px;box-shadow:inset 0 1px 1px rgba(0,0,0,0.25),0 0 0 0.6px rgba(90,90,90,0.5);"></div>
<div class="t" style="left:1341.38px;top:1023.56px;font-size:10.8px;line-height:10.8px;color:#262626;font-weight:700;letter-spacing:0.892px;">90</div>
<div class="b " style="left:1420.1px;top:968.5px;width:139.8px;height:68.8px;background:linear-gradient(180deg,#1c1c1c 0%,#282828 60%,#343434 100%);border-radius:5px;"></div>
<div class="b " style="left:1425.9px;top:974.8px;width:128.2px;height:40.6px;background:#ffffff;border-radius:3.5px;"></div>
<div class="t" style="left:1479.80px;top:1023.56px;font-size:10.8px;line-height:10.8px;color:#ffffff;font-weight:700;letter-spacing:0.895px;">100</div>
<div class="b " style="left:1563.3px;top:968.5px;width:54px;height:20.8px;background:linear-gradient(180deg,#a2a2a2 0%,#8e8e8e 30%,#6a6a6a 100%);border-radius:4px 4px 0 0;"></div>
<div class="b " style="left:1563.3px;top:990.6px;width:54px;height:47.4px;background:linear-gradient(180deg,#7a7a7a 0%,#8a8a8a 50%,#6a6a6a 100%);border-radius:0 0 4px 4px;"></div>
<div class="b " style="left:1618.75px;top:968.5px;width:51.25px;height:34px;background:linear-gradient(180deg,#a2a2a2 0%,#8e8e8e 30%,#6a6a6a 100%);border-radius:3px 0 0 0;"></div>
<div class="b " style="left:1671.4px;top:968.5px;width:49.85px;height:34px;background:linear-gradient(180deg,#a2a2a2 0%,#8e8e8e 30%,#6a6a6a 100%);"></div>
<div class="b " style="left:1722.7px;top:968.5px;width:49.2px;height:34px;background:linear-gradient(180deg,#a2a2a2 0%,#8e8e8e 30%,#6a6a6a 100%);"></div>
<div class="b " style="left:1773.4px;top:968.5px;width:49.4px;height:34px;background:linear-gradient(180deg,#a2a2a2 0%,#8e8e8e 30%,#6a6a6a 100%);"></div>
<div class="b " style="left:1824.3px;top:968.5px;width:49.6px;height:34px;background:linear-gradient(180deg,#a2a2a2 0%,#8e8e8e 30%,#6a6a6a 100%);"></div>
<div class="b " style="left:1874px;top:968.5px;width:46px;height:34px;background:linear-gradient(180deg,#464646,#2c2c2c);"></div>
<div class="b " style="left:1618.8px;top:1004px;width:153.2px;height:34px;background:linear-gradient(180deg,#aaaaaa 0%,#9a9a9a 20%,#6e6e6e 100%);border-radius:0 0 0 3px;"></div>
<div class="b " style="left:1773.4px;top:1004px;width:146.6px;height:34px;background:linear-gradient(180deg,#aaaaaa 0%,#9a9a9a 20%,#6e6e6e 100%);"></div>
<svg width="1920" height="1039" viewBox="0 0 1920 1039">
<defs><linearGradient id="bi" x1="0" x2="0" y1="0" y2="1"><stop offset="0" stop-color="#6c6c6c"/><stop offset="1" stop-color="#a2a2a2"/></linearGradient>
<linearGradient id="bi2" x1="0" x2="0" y1="0" y2="1"><stop offset="0" stop-color="#262626"/><stop offset="1" stop-color="#3c3c3c"/></linearGradient>
<linearGradient id="sq" x1="0" x2="0" y1="0" y2="1"><stop offset="0" stop-color="#b4b4b4"/><stop offset="0.5" stop-color="#a4a4a4"/><stop offset="0.500" stop-color="#8e8e8e"/><stop offset="1" stop-color="#8a8a8a"/></linearGradient></defs>
<circle cx="1590.200" cy="979" r="8.400" fill="url(#bi)"/><path d="M1585.800 981.600h8.800l-4.400-5z" fill="#2a2a2a"/>
<rect x="1573.800" y="997.200" width="32.800" height="33" rx="5" fill="url(#sq)" stroke="#1a1a1a" stroke-width="2"/>
<rect x="1582.800" y="1006.800" width="15.200" height="15" fill="#050505"/>
<g fill="url(#bi)"><circle cx="1644.500" cy="986" r="11"/><circle cx="1696" cy="986" r="11"/><circle cx="1747.500" cy="986" r="11"/><circle cx="1798.500" cy="986" r="11"/><circle cx="1849" cy="986" r="11"/>
<circle cx="1653.500" cy="1021.300" r="10.800"/><circle cx="1894.200" cy="1021.300" r="10.800"/></g>
<circle cx="1900.500" cy="986" r="11" fill="url(#bi2)"/>
<rect x="1640.200" y="981.500" width="8.800" height="8.800" fill="#2a2a2a"/>
<path d="M1692.800 980.200v11.600l9.600-5.800z" fill="#2a2a2a"/>
<g fill="none" stroke="#2a2a2a" stroke-width="2">
<path d="M1744 980.400h-2.400v11.200h2.400 M1751 980.400h2.400v11.200h-2.400"/>
<path d="M1798.500 986c-1.800-3.200-6.600-3.200-6.600 0s4.800 3.200 6.600 0c1.800-3.200 6.600-3.200 6.600 0s-4.800 3.200-6.600 0z" stroke-width="1.900"/>
<path d="M1843.600 985.200a5.600 5.600 0 0 1 9.600-3.400 M1854.400 986.800a5.600 5.600 0 0 1-9.600 3.400" stroke-width="2.200"/>
<path d="M1650 1016.300l-4.200 5 4.200 5 M1656 1016.300l-4.200 5 4.200 5" stroke-width="1.900"/>
<path d="M1891.700 1016.300l4.200 5-4.200 5 M1897.700 1016.300l4.200 5-4.200 5" stroke-width="1.900"/>
</g>
<path d="M1853.600 978.800v3.800h-3.800z M1844.400 993.200v-3.800h3.800z" fill="#2a2a2a"/>
<circle cx="1746.100" cy="986" r="1" fill="#2a2a2a"/><circle cx="1748.900" cy="986" r="1" fill="#2a2a2a"/>
</svg>
<div class="t" style="left:1683.50px;top:1008.61px;font-size:25.5px;line-height:25.5px;color:#2c2c2c;letter-spacing:0.449px;text-shadow:0 1px 0 rgba(255,255,255,0.22);-webkit-text-stroke:0.5px #2c2c2c;">Back</div>
<div class="t" style="left:1804.50px;top:1008.61px;font-size:25.5px;line-height:25.5px;color:#2c2c2c;letter-spacing:1.641px;text-shadow:0 1px 0 rgba(255,255,255,0.22);-webkit-text-stroke:0.5px #2c2c2c;">Next</div>
</div>
</body></html>
